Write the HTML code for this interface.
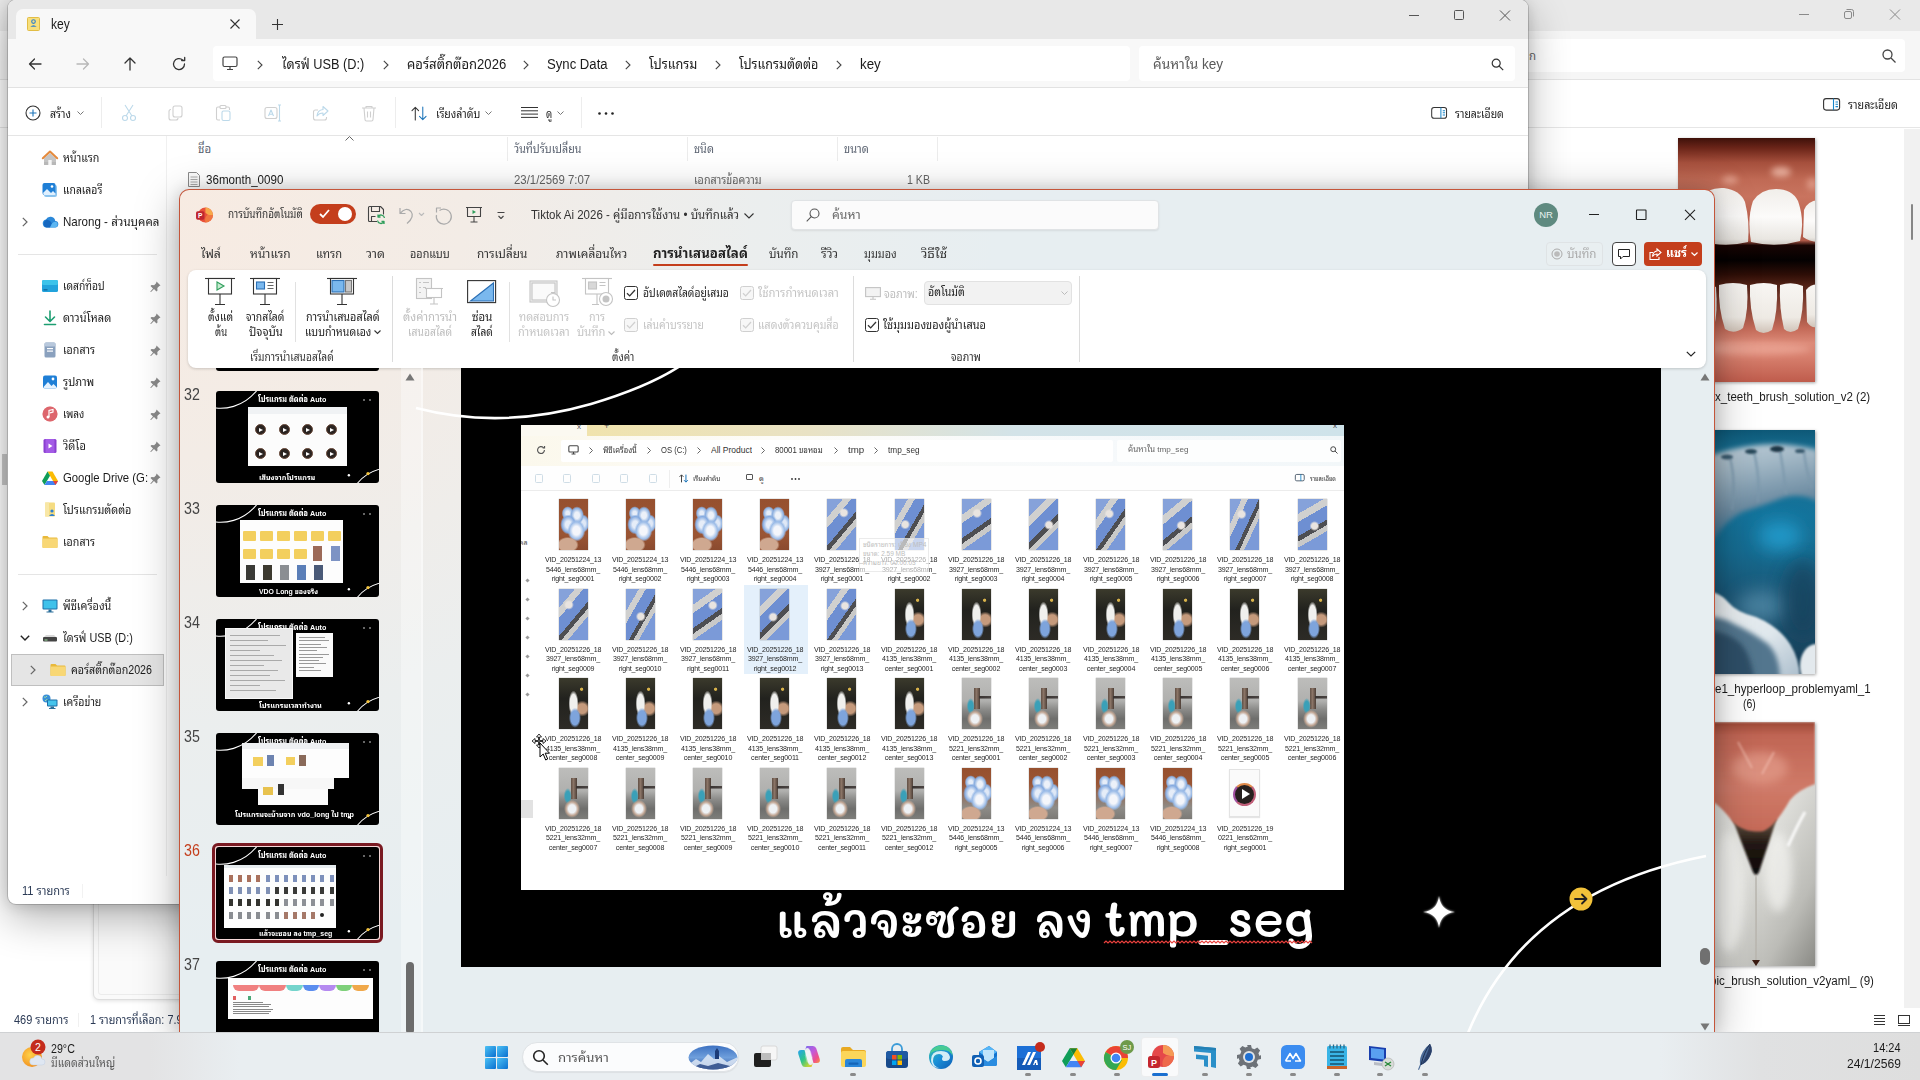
<!DOCTYPE html>
<html lang="th">
<head>
<meta charset="utf-8">
<title>Desktop</title>
<style>
*{box-sizing:border-box;margin:0;padding:0}
html,body{width:1920px;height:1080px;overflow:hidden;background:#fff}
body{position:relative;font-family:"Liberation Sans","Noto Sans Thai Looped","Noto Sans Thai UI","Noto Sans Thai","Loma","Noto Sans CJK SC",sans-serif;font-size:12px;color:#1b1b1b;-webkit-font-smoothing:antialiased}
.abs{position:absolute}
.t{position:absolute;white-space:nowrap;line-height:1}
svg{position:absolute;overflow:visible}
/* background explorer window */
#bg{position:absolute;left:0;top:0;width:1920px;height:1032px;background:#fff}
#bg .title{position:absolute;left:0;top:0;width:1920px;height:31px;background:#e9e9e9}
#bg .nav{position:absolute;left:0;top:31px;width:1920px;height:49px;background:#f6f6f6;border-bottom:1px solid #e3e3e3}
#bg .tool{position:absolute;left:0;top:80px;width:1920px;height:48px;background:#fff;border-bottom:1px solid #e6e6e6}
/* explorer key */
#ex{position:absolute;left:8px;top:0;width:1520px;height:904px;background:#fff;border-radius:8px;box-shadow:0 0 0 1px rgba(0,0,0,.16),0 14px 42px rgba(0,0,0,.30),0 2px 14px rgba(0,0,0,.14);overflow:hidden}
/* ppt */
#pp{position:absolute;left:180px;top:190px;width:1534px;height:842px;border-radius:9px 9px 0 0;background:radial-gradient(ellipse 820px 760px at 0 0,#f7ebe2 0,#f3ece6 35%,rgba(238,238,236,.6) 70%,rgba(231,238,241,0) 100%),#e7eef1;box-shadow:0 0 0 1px #c4553a,0 10px 44px rgba(0,0,0,.34),0 0 16px rgba(0,0,0,.14);overflow:hidden}
/* taskbar */
#tb{position:absolute;left:0;top:1032px;width:1920px;height:48px;background:linear-gradient(90deg,#e3e3e4 0,#e3e3e4 150px,#e9eef1 240px,#e9eef1 1660px,#e0e1e2 1760px,#dedede 100%);border-top:1px solid #cfd1d3}
</style>
</head>
<body>
<div id="bg">
  <div class="title"></div>
  <div class="nav"></div>
  <div class="tool"></div>
  <!-- window buttons -->
  <svg style="left:1780px;top:0" width="140" height="31" viewBox="0 0 140 31" fill="none" stroke="#8a8a8a" stroke-width="1">
    <path d="M19 14.5h10"/>
    <rect x="64.5" y="11.5" width="7" height="7" rx="1.5"/><path d="M66.5 9.500h5a2 2 0 0 1 2 2v5"/>
    <path d="M110 9.500l10 10M120 9.500l-10 10"/>
  </svg>
  <!-- search box -->
  <div class="abs" style="left:1400px;top:39px;width:1505px;height:33px;background:#fff;border-radius:4px;left:400px"></div>
  <span class="t" style="left:1529px;top:51px;font-size:11.500px;color:#666">ก</span>
  <svg style="left:1881px;top:48px" width="16" height="16" viewBox="0 0 16 16" fill="none" stroke="#444" stroke-width="1.3"><circle cx="6.500" cy="6.500" r="4.500"/><path d="M10 10l4.500 4.500"/></svg>
  <!-- details -->
  <svg style="left:1823px;top:98px" width="18" height="14" viewBox="0 0 18 14" fill="none" stroke="#333" stroke-width="1.1"><rect x=".6" y=".6" width="16" height="11.500" rx="2.500"/><path d="M10.500.6v11.500" stroke="#1a86c9"/><path d="M12.500 4h2.500M12.500 6.300h2.500M12.500 8.600h2.500" stroke="#1a86c9"/></svg>
  <span class="t" style="transform:scaleX(0.893);transform-origin:0 0;max-width:57px;overflow-x:clip;left:1848px;top:99px;font-size:12px;color:#222">รายละเอียด</span>
  <!-- scrollbar gutter -->
  <div class="abs" style="left:1904px;top:129px;width:16px;height:879px;background:#f1f1f1"></div>
  <div class="abs" style="left:1911px;top:204px;width:2px;height:36px;background:#868686;border-radius:1px"></div>
  <!-- thumbnails -->
  <svg style="left:1678px;top:138px;box-shadow:1px 1px 3px rgba(0,0,0,.35)" width="137" height="244" viewBox="0 0 137 244">
<defs>
<linearGradient id="g1a" x1="0" y1="0" x2="0" y2="1"><stop offset="0" stop-color="#3e110a"/><stop offset=".04" stop-color="#6a2418"/><stop offset=".1" stop-color="#a54f3c"/><stop offset=".17" stop-color="#c06a55"/><stop offset=".24" stop-color="#c9745f"/><stop offset=".32" stop-color="#bf6652"/><stop offset=".42" stop-color="#b05a48"/><stop offset=".44" stop-color="#180503"/><stop offset=".5" stop-color="#040101"/><stop offset=".56" stop-color="#2e0e07"/><stop offset=".6" stop-color="#4f2014"/><stop offset=".78" stop-color="#c46a58"/><stop offset=".84" stop-color="#dc8a78"/><stop offset=".9" stop-color="#d67e6c"/><stop offset="1" stop-color="#bf5c4c"/></linearGradient>
<linearGradient id="g1t" x1="0" y1="0" x2="0" y2="1"><stop offset="0" stop-color="#f1eeea"/><stop offset=".5" stop-color="#fcfbfa"/><stop offset=".9" stop-color="#e9e6e1"/><stop offset="1" stop-color="#cfcac3"/></linearGradient>
<linearGradient id="g1l" x1="0" y1="0" x2="0" y2="1"><stop offset="0" stop-color="#f8f6f3"/><stop offset=".7" stop-color="#eeeae4"/><stop offset="1" stop-color="#d0c3b8"/></linearGradient>
<filter id="b1" x="-20%" y="-20%" width="140%" height="140%"><feGaussianBlur stdDeviation=".7"/></filter>
<filter id="b1b" x="-100%" y="-100%" width="300%" height="300%"><feGaussianBlur stdDeviation="3"/></filter>
<clipPath id="c1"><rect width="137" height="244"/></clipPath>
</defs>
<g clip-path="url(#c1)">
<rect width="137" height="244" fill="url(#g1a)"/>
<ellipse cx="103" cy="34" rx="10" ry="5" fill="#f4c4b4" opacity=".75" filter="url(#b1b)"/>
<ellipse cx="52" cy="42" rx="8" ry="4" fill="#f0b8a6" opacity=".65" filter="url(#b1b)"/>
<ellipse cx="134" cy="46" rx="5" ry="6" fill="#f0b8a6" opacity=".6" filter="url(#b1b)"/>
<g filter="url(#b1)">
<path d="M73 104Q69 80 75 63Q83 51 98 51Q114 51 120 63Q127 83 122 103Q98 110 73 104Z" fill="url(#g1t)"/>
<path d="M22 103Q16 78 22 60Q30 49 46 50Q62 52 67 64Q72 84 70 104Q46 110 22 103Z" fill="url(#g1t)"/>
<path d="M126 72Q130 62 142 62L142 104Q132 104 125 99Z" fill="url(#g1t)"/>
<path d="M41 147Q55 143 69 147Q71 172 65 190Q56 197 47 191Q40 170 41 147Z" fill="url(#g1l)"/>
<path d="M72 147Q86 143 99 147Q100 174 94 192Q85 198 78 192Q71 170 72 147Z" fill="url(#g1l)"/>
<path d="M102 147Q114 143 125 148Q126 174 120 191Q112 197 106 191Q101 170 102 147Z" fill="url(#g1l)"/>
<path d="M128 152Q134 145 142 147L142 188Q134 192 129 184Z" fill="url(#g1l)"/>
<path d="M20 149Q30 145 38 149Q40 175 36 189Q28 194 22 189Z" fill="url(#g1l)"/>
</g>
<ellipse cx="78" cy="211" rx="55" ry="6" fill="#f2b0a0" opacity=".6" filter="url(#b1b)"/>
</g>
</svg>

  <svg style="left:1678px;top:430px;box-shadow:1px 1px 3px rgba(0,0,0,.35)" width="137" height="244" viewBox="0 0 137 244">
<defs>
<linearGradient id="g2a" x1="0" y1="0" x2="0" y2="1"><stop offset="0" stop-color="#0d5877"/><stop offset=".08" stop-color="#176d90"/><stop offset=".35" stop-color="#14739b"/><stop offset=".5" stop-color="#166b90"/><stop offset=".68" stop-color="#1a5676"/><stop offset=".85" stop-color="#1a4a66"/><stop offset="1" stop-color="#173a52"/></linearGradient>
<linearGradient id="g2r" x1="0" y1="0" x2=".25" y2="1"><stop offset="0" stop-color="#c0cfd9"/><stop offset=".3" stop-color="#a3b8c6"/><stop offset=".7" stop-color="#6d8ca2"/><stop offset="1" stop-color="#2f6f92"/></linearGradient>
<linearGradient id="g2t" x1="0" y1="0" x2="1" y2="1"><stop offset="0" stop-color="#f1f5f7"/><stop offset=".6" stop-color="#dfe7ec"/><stop offset="1" stop-color="#a9bccb"/></linearGradient>
<filter id="b2" x="-30%" y="-30%" width="160%" height="160%"><feGaussianBlur stdDeviation="2.500"/></filter>
<filter id="b2b" x="-100%" y="-100%" width="300%" height="300%"><feGaussianBlur stdDeviation="9"/></filter>
<filter id="b2c" x="-30%" y="-30%" width="160%" height="160%"><feGaussianBlur stdDeviation="1"/></filter>
<clipPath id="c2"><rect width="137" height="244"/></clipPath>
</defs>
<g clip-path="url(#c2)">
<rect width="137" height="244" fill="url(#g2a)"/>
<ellipse cx="102" cy="106" rx="22" ry="14" fill="#25a8dc" opacity=".75" filter="url(#b2b)"/>
<ellipse cx="84" cy="176" rx="26" ry="16" fill="#5a93b0" opacity=".7" filter="url(#b2b)"/>
<ellipse cx="125" cy="170" rx="20" ry="40" fill="#143f5a" opacity=".7" filter="url(#b2b)"/>
<path d="M20 30Q50 18 80 15Q110 12 140 20L140 72Q124 62 104 68Q84 76 64 82Q46 92 36 110L20 112Z" fill="url(#g2r)" filter="url(#b2)"/>
<path d="M52 28q6 22 2 52M76 22q6 24 4 50M102 20q4 22 6 44M126 22q2 18 8 36" stroke="#7c98ac" stroke-width="2.500" fill="none" opacity=".8" filter="url(#b2c)"/>
<ellipse cx="99" cy="19" rx="7" ry="3" fill="#1b3444" filter="url(#b2c)"/>
<ellipse cx="73" cy="21.500" rx="6" ry="2.600" fill="#27465a" filter="url(#b2c)"/>
<ellipse cx="49" cy="27" rx="6" ry="2.600" fill="#3a5a6e" filter="url(#b2c)"/>
<ellipse cx="122" cy="21" rx="5" ry="2" fill="#36566a" filter="url(#b2c)"/>
<path d="M20 160Q40 160 50 172Q58 182 78 187Q100 196 112 214Q122 230 122 250L20 250Z" fill="url(#g2t)" filter="url(#b2c)"/>
<path d="M20 186Q44 186 56 194Q74 202 90 214Q102 226 102 250L20 250Z" fill="#52768e" filter="url(#b2)"/>
<path d="M20 200Q50 200 64 215Q74 228 76 250L20 250Z" fill="#2f5068" filter="url(#b2)"/>
<ellipse cx="138" cy="236" rx="16" ry="22" fill="#e3e9ed" filter="url(#b2c)"/>
</g>
</svg>

  <svg style="left:1678px;top:722px;box-shadow:1px 1px 3px rgba(0,0,0,.35)" width="137" height="244" viewBox="0 0 137 244">
<defs>
<linearGradient id="g3a" x1="0" y1="0" x2="1" y2="1"><stop offset="0" stop-color="#e9e9e5"/><stop offset=".55" stop-color="#e0e0dc"/><stop offset=".82" stop-color="#bcbcb7"/><stop offset="1" stop-color="#8a8a85"/></linearGradient>
<linearGradient id="g3g" x1="0" y1="0" x2="0" y2="1"><stop offset="0" stop-color="#9c4836"/><stop offset=".12" stop-color="#c06554"/><stop offset=".6" stop-color="#cf7a68"/><stop offset="1" stop-color="#c56a58"/></linearGradient>
<linearGradient id="g3d" x1="0" y1="0" x2="0" y2="1"><stop offset="0" stop-color="#6a5848"/><stop offset=".45" stop-color="#241a14"/><stop offset="1" stop-color="#0c0807"/></linearGradient>
<filter id="b3" x="-20%" y="-20%" width="140%" height="140%"><feGaussianBlur stdDeviation="1"/></filter>
<filter id="b3b" x="-100%" y="-100%" width="300%" height="300%"><feGaussianBlur stdDeviation="5"/></filter>
<clipPath id="c3"><rect width="137" height="244"/></clipPath>
</defs>
<g clip-path="url(#c3)">
<rect width="137" height="244" fill="url(#g3a)"/>
<ellipse cx="50" cy="170" rx="16" ry="60" fill="#f6f6f3" opacity=".8" filter="url(#b3b)"/>
<ellipse cx="100" cy="150" rx="14" ry="40" fill="#f4f4f1" opacity=".7" filter="url(#b3b)"/>
<path d="M54 96L99 96L81 150Q78 156 75 150Z" fill="url(#g3d)" filter="url(#b3)"/>
<path d="M78 154Q79 200 78 244" stroke="#b9b6af" stroke-width="3" fill="none" filter="url(#b3)"/>
<path d="M0 0H137V62Q120 68 112 78Q104 92 97 100Q88 110 82 109.500Q72 109.500 67 107.500Q58 104 54 99Q46 88 37 81L0 66Z" fill="url(#g3g)" filter="url(#b3)"/>
<ellipse cx="82" cy="46" rx="28" ry="16" fill="#eaa796" opacity=".55" filter="url(#b3b)"/>
<path d="M60 20l14 26M96 30l-12 22" stroke="#f3c0b2" stroke-width="2" opacity=".6" filter="url(#b3)"/>
<path d="M110 124Q120 102 127 90" stroke="#fff" stroke-width="3" fill="none" opacity=".85" filter="url(#b3)"/>
<path d="M74 238l4 6l4-6z" fill="#3a1a10"/>
</g>
</svg>

  <span class="t" style="transform:scaleX(0.923);transform-origin:0 0;max-width:169px;overflow-x:clip;left:1714.500px;top:391px;font-size:12.500px;color:#1b1b1b">x_teeth_brush_solution_v2 (2)</span>
  <span class="t" style="transform:scaleX(0.926);transform-origin:0 0;max-width:169px;overflow-x:clip;left:1714.500px;top:683px;font-size:12.500px;color:#1b1b1b">e1_hyperloop_problemyaml_1</span>
  <span class="t" style="transform:scaleX(0.840);transform-origin:0 0;max-width:16px;overflow-x:clip;left:1743px;top:698px;font-size:12.500px;color:#1b1b1b">(6)</span>
  <span class="t" style="transform:scaleX(0.929);transform-origin:0 0;max-width:177px;overflow-x:clip;left:1710px;top:975px;font-size:12.500px;color:#1b1b1b">bic_brush_solution_v2yaml_ (9)</span>
  <!-- status bar -->
  <span class="t" style="transform:scaleX(0.915);transform-origin:0 0;max-width:60px;overflow-x:clip;left:14px;top:1014px;font-size:12px;color:#2b3a55">469 รายการ</span>
  <div class="abs" style="left:78px;top:1013px;width:1px;height:14px;background:#f0f0f0"></div>
  <span class="t" style="transform:scaleX(0.901);transform-origin:0 0;max-width:132px;overflow-x:clip;left:90px;top:1014px;font-size:12px;color:#2b3a55">1 รายการที่เลือก: 7.91 MB</span>
  <svg style="left:1873px;top:1013px" width="40" height="14" viewBox="0 0 40 14" fill="none" stroke="#333" stroke-width="1"><path d="M1 2.500h11M1 5.500h11M1 8.500h11M1 11.500h11"/><rect x="25.500" y="2.500" width="11" height="8"/><path d="M25 12.500h12"/></svg>
  <!-- ghost card -->
  <div class="abs" style="left:93px;top:896px;width:95px;height:104px;background:#fafafa;border:1px solid #dedede;border-radius:6px;box-shadow:0 1px 4px rgba(0,0,0,.12)"><div class="abs" style="left:4px;top:4px;right:4px;bottom:4px;border:1px solid #ececec;border-radius:3px"></div></div>
  <!-- left edge bits -->
  <div class="abs" style="left:2px;top:454px;width:5px;height:31px;background:#c9c9c9"></div>
</div>
<div id="ex">
  <!-- title bar -->
  <div class="abs" style="left:0;top:0;width:1520px;height:39px;background:#e8e8e8"></div>
  <div class="abs" style="left:8px;top:9px;width:240px;height:31px;background:#f8f8f8;border-radius:7px 7px 0 0"></div>
  <svg style="left:19px;top:17px" width="13" height="14" viewBox="0 0 13 14"><rect x=".5" y=".5" width="12" height="13" rx="1" fill="#f7df7c" stroke="#e2bd45"/><circle cx="6.500" cy="4.600" r="1.800" fill="none" stroke="#2d7fd0" stroke-width="1.100"/><path d="M3.300 9.800q3.200-3.200 6.400 0z" fill="#2d7fd0"/></svg>
  <span class="t" style="transform:scaleX(0.864);transform-origin:0 0;max-width:23px;overflow-x:clip;left:43px;top:17px;font-size:14px;color:#1b1b1b">key</span>
  <svg style="left:222px;top:19px" width="10" height="10" viewBox="0 0 10 10" stroke="#333" stroke-width="1.100" fill="none"><path d="M.5.5l9 9M9.500.5l-9 9"/></svg>
  <svg style="left:264px;top:19px" width="11" height="11" viewBox="0 0 11 11" stroke="#333" stroke-width="1.100" fill="none"><path d="M5.500 0v11M0 5.500h11"/></svg>
  <svg style="left:1390px;top:0" width="130" height="31" viewBox="0 0 130 31" fill="none" stroke="#555" stroke-width="1">
    <path d="M11 15.500h10"/><rect x="56.500" y="10.500" width="9" height="9" rx="1"/><path d="M102 10.500l10 10M112 10.500l-10 10"/>
  </svg>
  <!-- nav bar -->
  <div class="abs" style="left:0;top:39px;width:1520px;height:49px;background:#f8f8f8;border-bottom:1px solid #e2e2e2"></div>
  <svg style="left:20px;top:56px" width="180" height="16" viewBox="0 0 180 16" fill="none" stroke-width="1.300" stroke-linecap="round" stroke-linejoin="round">
    <path d="M13 8H1.500M6.500 3L1.500 8l5 5" stroke="#333"/>
    <path d="M49 8h11.500M55.500 3l5 5-5 5" stroke="#b8b8b8"/>
    <path d="M102 14V2M97 7l5-5 5 5" stroke="#333"/>
    <path d="M156.500 8a5.500 5.500 0 1 1-1.800-4M156.700 1.500v3h-3" stroke="#333"/>
  </svg>
  <div class="abs" style="left:205px;top:46px;width:917px;height:35px;background:#fff;border-radius:4px"></div>
  <svg style="left:214px;top:56px" width="16" height="15" viewBox="0 0 16 15" fill="none" stroke="#444" stroke-width="1.200"><rect x="1" y="1" width="14" height="9.500" rx="1.500"/><path d="M5 13.500h6M8 10.500v3"/></svg>
  <svg style="left:248.5px;top:60px" width="6" height="10" viewBox="0 0 6 10" fill="none" stroke="#444" stroke-width="1.100"><path d="M.8.800l4.200 4.200-4.200 4.200"/></svg>
  <span class="t" style="transform:scaleX(0.911);transform-origin:0 0;max-width:91px;overflow-x:clip;left:274px;top:57px;font-size:14px;color:#1b1b1b">ไดรฟ์ USB (D:)</span>
  <svg style="left:374.5px;top:60px" width="6" height="10" viewBox="0 0 6 10" fill="none" stroke="#444" stroke-width="1.100"><path d="M.8.800l4.200 4.200-4.200 4.200"/></svg>
  <span class="t" style="transform:scaleX(0.934);transform-origin:0 0;max-width:107px;overflow-x:clip;left:399px;top:57px;font-size:14px;color:#1b1b1b">คอร์สติ๊กต๊อก2026</span>
  <svg style="left:514.5px;top:60px" width="6" height="10" viewBox="0 0 6 10" fill="none" stroke="#444" stroke-width="1.100"><path d="M.8.800l4.200 4.200-4.200 4.200"/></svg>
  <span class="t" style="transform:scaleX(0.938);transform-origin:0 0;max-width:66px;overflow-x:clip;left:539px;top:57px;font-size:14px;color:#1b1b1b">Sync Data</span>
  <svg style="left:617px;top:60px" width="6" height="10" viewBox="0 0 6 10" fill="none" stroke="#444" stroke-width="1.100"><path d="M.8.800l4.200 4.200-4.200 4.200"/></svg>
  <span class="t" style="transform:scaleX(0.906);transform-origin:0 0;max-width:54px;overflow-x:clip;left:641px;top:57px;font-size:14px;color:#1b1b1b">โปรแกรม</span>
  <svg style="left:706.5px;top:60px" width="6" height="10" viewBox="0 0 6 10" fill="none" stroke="#444" stroke-width="1.100"><path d="M.8.800l4.200 4.200-4.200 4.200"/></svg>
  <span class="t" style="transform:scaleX(0.898);transform-origin:0 0;max-width:89px;overflow-x:clip;left:731px;top:57px;font-size:14px;color:#1b1b1b">โปรแกรมตัดต่อ</span>
  <svg style="left:828px;top:60px" width="6" height="10" viewBox="0 0 6 10" fill="none" stroke="#444" stroke-width="1.100"><path d="M.8.800l4.200 4.200-4.200 4.200"/></svg>
  <span class="t" style="transform:scaleX(0.955);transform-origin:0 0;max-width:23px;overflow-x:clip;left:852px;top:57px;font-size:14px;color:#1b1b1b">key</span>
  <div class="abs" style="left:1131px;top:46px;width:376px;height:35px;background:#fff;border-radius:4px"></div>
  <span class="t" style="transform:scaleX(0.972);transform-origin:0 0;max-width:73px;overflow-x:clip;left:1145px;top:57px;font-size:14px;color:#5a5a5a">ค้นหาใน key</span>
  <svg style="left:1483px;top:58px" width="13" height="13" viewBox="0 0 13 13" fill="none" stroke="#333" stroke-width="1.200"><circle cx="5.200" cy="5.200" r="4"/><path d="M8.200 8.200l4 4"/></svg>
  <!-- toolbar -->
  <div class="abs" style="left:0;top:89px;width:1520px;height:47px;background:#fff;border-bottom:1px solid #e5e5e5"></div>
  <svg style="left:17px;top:105px" width="16" height="16" viewBox="0 0 16 16" fill="none" stroke="#333" stroke-width="1.100"><circle cx="8" cy="8" r="7"/><path d="M8 4.500v7M4.500 8h7" stroke="#1a73b8"/></svg>
  <span class="t" style="transform:scaleX(0.875);transform-origin:0 0;max-width:25px;overflow-x:clip;left:42px;top:108px;font-size:12px;color:#1b1b1b">สร้าง</span>
  <svg style="left:69px;top:111px" width="7" height="5" viewBox="0 0 7 5" fill="none" stroke="#777" stroke-width="1"><path d="M.5.5l3 3 3-3"/></svg>
  <div class="abs" style="left:93px;top:97px;width:1px;height:31px;background:#ededed"></div>
  <svg style="left:113px;top:104px" width="260" height="18" viewBox="0 0 260 18" fill="none" stroke="#bcd9ea" stroke-width="1.100" stroke-linejoin="round">
    <path d="M4 1l7 11M12 1L5 12" stroke="#bcd9ea"/><circle cx="4" cy="14" r="2.500"/><circle cx="12" cy="14" r="2.500"/>
    <rect x="52" y="2" width="9" height="11" rx="2" stroke="#cfcfcf"/><path d="M50 5.500a2 2 0 0 0-2 2V14a2 2 0 0 0 2 2h5a2 2 0 0 0 2-2" stroke="#cfcfcf"/>
    <path d="M99 3h-2a1.500 1.500 0 0 0-1.500 1.500v10A1.500 1.500 0 0 0 97 16h2M105 3h2a1.500 1.500 0 0 1 1.500 1.500V6" stroke="#cfcfcf"/><rect x="99" y="1.500" width="6" height="3" rx="1" stroke="#cfcfcf"/><rect x="101" y="7" width="8" height="9.500" rx="1.500" stroke="#bcd9ea"/>
    <rect x="144" y="3.500" width="12" height="11" rx="2" stroke="#cfcfcf"/><path d="M147.500 12l2.500-6 2.500 6M148.300 10.200h3.400" stroke="#bcd9ea"/><path d="M158.500 1v16M157 1h3M157 17h3" stroke="#bcd9ea"/>
    <path d="M197 6h-2.500a2 2 0 0 0-2 2v6a2 2 0 0 0 2 2h9a2 2 0 0 0 2-2v-1" stroke="#cfcfcf"/><path d="M202 2.500l5 4.500-5 4.500V9q-4 0-6 3 .5-6 6-6.500z" stroke="#bcd9ea"/>
    <path d="M241 4h14M245 4V2.500h6V4M243 4l1 11.500a1.500 1.500 0 0 0 1.500 1.500h5a1.500 1.500 0 0 0 1.500-1.500L253 4M246.500 7.500v6M249.500 7.500v6" stroke="#cfcfcf"/>
  </svg>
  <div class="abs" style="left:387px;top:97px;width:1px;height:31px;background:#ededed"></div>
  <svg style="left:403px;top:106px" width="17" height="15" viewBox="0 0 18 16" fill="none" stroke-width="1.100" stroke-linecap="round" stroke-linejoin="round"><path d="M4.500 15V1.500M1 5l3.500-3.500L8 5" stroke="#333"/><path d="M12.500 1v13.500M9 11l3.500 3.500L16 11" stroke="#1a73b8"/></svg>
  <span class="t" style="transform:scaleX(0.880);transform-origin:0 0;max-width:51px;overflow-x:clip;left:427.500px;top:108px;font-size:12px;color:#1b1b1b">เรียงลำดับ</span>
  <svg style="left:477px;top:111px" width="7" height="5" viewBox="0 0 7 5" fill="none" stroke="#777" stroke-width="1"><path d="M.5.5l3 3 3-3"/></svg>
  <svg style="left:513px;top:107px" width="17" height="11" viewBox="0 0 17 11" fill="none" stroke="#333" stroke-width="1"><path d="M0 .5h17M0 3.800h17M0 7.100h17M0 10.400h17"/></svg>
  <span class="t" style="transform:scaleX(0.812);transform-origin:0 0;max-width:9px;overflow-x:clip;left:537.500px;top:108px;font-size:12px;color:#1b1b1b">ดู</span>
  <svg style="left:549px;top:111px" width="7" height="5" viewBox="0 0 7 5" fill="none" stroke="#777" stroke-width="1"><path d="M.5.5l3 3 3-3"/></svg>
  <div class="abs" style="left:573px;top:97px;width:1px;height:31px;background:#ededed"></div>
  <svg style="left:590px;top:112px" width="16" height="3" viewBox="0 0 16 3" fill="#222"><circle cx="1.500" cy="1.500" r="1.300"/><circle cx="8" cy="1.500" r="1.300"/><circle cx="14.500" cy="1.500" r="1.300"/></svg>
  <svg style="left:1423px;top:107px" width="17" height="13" viewBox="0 0 18 14" fill="none" stroke="#333" stroke-width="1.100"><rect x=".6" y=".6" width="16" height="11.500" rx="2.500"/><path d="M10.500.6v11.500" stroke="#1a86c9"/><path d="M12.500 4h2.500M12.500 6.300h2.500M12.500 8.600h2.500" stroke="#1a86c9"/></svg>
  <span class="t" style="transform:scaleX(0.875);transform-origin:0 0;max-width:57px;overflow-x:clip;left:1447px;top:108px;font-size:12px;color:#222">รายละเอียด</span>
  <!-- sidebar -->
  <div class="abs" style="left:158px;top:136px;width:1px;height:740px;background:#f0f0f0"></div>
  <div class="abs" style="left:10px;top:254px;width:139px;height:1px;background:#e5e5e5"></div>
<div class="abs" style="left:10px;top:574px;width:139px;height:1px;background:#e5e5e5"></div>
<div class="abs" style="left:3px;top:654px;width:153px;height:32px;background:#e5e5e5;border:1px solid #bfbfbf"></div>
<svg style="left:34px;top:150px" width="16" height="16" viewBox="0 0 16 16"><path d="M2 8.500v6.500h12V8.500L8 3z" fill="#c4c4c4"/><path d="M2 12v3h12v-3z" fill="#b0b0b0" opacity=".6"/><rect x="6.300" y="10" width="3.400" height="5" fill="#f7f7f7"/><path d="M.8 8.300L8 1.600l7.200 6.700" fill="none" stroke="#e58a3c" stroke-width="2" stroke-linejoin="round" stroke-linecap="round"/></svg>
<span class="t" style="transform:scaleX(0.890);transform-origin:0 0;max-width:42px;overflow-x:clip;left:55px;top:152px;font-size:12px;color:#1b1b1b">หน้าแรก</span>
<svg style="left:34px;top:182px" width="16" height="16" viewBox="0 0 16 16"><rect x="2" y="3" width="13" height="12" rx="2" fill="#8cc4ee"/><rect x="0.500" y="1" width="13" height="12" rx="2" fill="#1f7fd6"/><path d="M1 11l4-4 4 4 2-2 2.500 2.500v.5a1 1 0 0 1-1 1h-10.500z" fill="#dff0ff"/><circle cx="10" cy="4.500" r="1.300" fill="#fff"/></svg>
<span class="t" style="transform:scaleX(0.867);transform-origin:0 0;max-width:46px;overflow-x:clip;left:55px;top:184px;font-size:12px;color:#1b1b1b">แกลเลอรี</span>
<svg style="left:34px;top:214px" width="16" height="16" viewBox="0 0 16 16"><path d="M4.500 13.500a4 4 0 0 1-.6-7.900 5 5 0 0 1 9.400 1.300 3.300 3.300 0 0 1-.6 6.600z" fill="#2b88d8"/><path d="M4.500 13.500a4 4 0 0 1 1-7.800q3 .5 4.500 3.800l-2 4z" fill="#1668c0"/><path d="M8 13.500l2-4q2-2.500 4.800-1.300a3.300 3.300 0 0 1-1.500 5.300z" fill="#5cb6f2"/></svg>
<span class="t" style="transform:scaleX(0.889);transform-origin:0 0;max-width:109px;overflow-x:clip;left:55px;top:215px;font-size:13px;color:#1b1b1b">Narong - ส่วนบุคคล</span>
<svg style="left:14px;top:217px" width="6" height="10" viewBox="0 0 6 10" fill="none" stroke="#666" stroke-width="1.200"><path d="M.8.800l4.200 4.200-4.200 4.200"/></svg>
<svg style="left:34px;top:278px" width="16" height="16" viewBox="0 0 16 16"><rect x="0" y="2" width="16" height="12" rx="1.500" fill="#22a3dc"/><rect x="0" y="2" width="16" height="5" rx="1.500" fill="#3cc3ea"/><rect x="1.500" y="11" width="4" height="1.500" fill="#0f6fa6"/></svg>
<span class="t" style="transform:scaleX(0.857);transform-origin:0 0;max-width:50px;overflow-x:clip;left:55px;top:280px;font-size:12px;color:#1b1b1b">เดสก์ท็อป</span>
<svg style="left:142px;top:281px" width="11" height="11" viewBox="0 0 11 11"><path d="M6.500.5l4 4-1.200.4-2 2 .2 2.600-1 1-2.500-2.500L1 11l-.8-.2L3 7.500.5 5l1-1 2.600.2 2-2z" fill="#8a8a8a"/></svg>
<svg style="left:34px;top:310px" width="16" height="16" viewBox="0 0 16 16"><path d="M8 1v10M3.500 7L8 11.500 12.500 7" fill="none" stroke="#1e9e72" stroke-width="1.600" stroke-linecap="round" stroke-linejoin="round"/><path d="M2.500 14.500h11" stroke="#1e9e72" stroke-width="1.600" stroke-linecap="round"/></svg>
<span class="t" style="transform:scaleX(0.923);transform-origin:0 0;max-width:53px;overflow-x:clip;left:55px;top:312px;font-size:12px;color:#1b1b1b">ดาวน์โหลด</span>
<svg style="left:142px;top:313px" width="11" height="11" viewBox="0 0 11 11"><path d="M6.500.5l4 4-1.200.4-2 2 .2 2.600-1 1-2.500-2.500L1 11l-.8-.2L3 7.500.5 5l1-1 2.600.2 2-2z" fill="#8a8a8a"/></svg>
<svg style="left:34px;top:342px" width="16" height="16" viewBox="0 0 16 16"><rect x="2.500" y="0.500" width="11" height="15" rx="1.500" fill="#8aa1be"/><rect x="2.500" y="0.500" width="11" height="4" rx="1.500" fill="#b8c8dc"/><rect x="5" y="6" width="6" height="1.200" fill="#fff"/><rect x="5" y="8.500" width="6" height="1.200" fill="#fff"/></svg>
<span class="t" style="transform:scaleX(0.889);transform-origin:0 0;max-width:37px;overflow-x:clip;left:55px;top:344px;font-size:12px;color:#1b1b1b">เอกสาร</span>
<svg style="left:142px;top:345px" width="11" height="11" viewBox="0 0 11 11"><path d="M6.500.5l4 4-1.200.4-2 2 .2 2.600-1 1-2.500-2.500L1 11l-.8-.2L3 7.500.5 5l1-1 2.600.2 2-2z" fill="#8a8a8a"/></svg>
<svg style="left:34px;top:374px" width="16" height="16" viewBox="0 0 16 16"><rect x="1" y="1.500" width="14" height="13" rx="2" fill="#1f7fd6"/><path d="M1.500 13l4.500-5 3.500 4 2-2 3 3v.5a1 1 0 0 1-1 1h-11z" fill="#e4f2ff"/><circle cx="11" cy="5" r="1.400" fill="#fff"/></svg>
<span class="t" style="transform:scaleX(0.912);transform-origin:0 0;max-width:35px;overflow-x:clip;left:55px;top:376px;font-size:12px;color:#1b1b1b">รูปภาพ</span>
<svg style="left:142px;top:377px" width="11" height="11" viewBox="0 0 11 11"><path d="M6.500.5l4 4-1.200.4-2 2 .2 2.600-1 1-2.500-2.500L1 11l-.8-.2L3 7.500.5 5l1-1 2.600.2 2-2z" fill="#8a8a8a"/></svg>
<svg style="left:34px;top:406px" width="16" height="16" viewBox="0 0 16 16"><circle cx="8" cy="8" r="7.500" fill="#e0655a"/><circle cx="8" cy="8" r="7.500" fill="#d96a8a" opacity=".4"/><path d="M7 11V4.500l4-1V6l-3 .8" fill="none" stroke="#fff" stroke-width="1.200"/><circle cx="6" cy="11" r="1.500" fill="#fff"/></svg>
<span class="t" style="transform:scaleX(0.840);transform-origin:0 0;max-width:26px;overflow-x:clip;left:55px;top:408px;font-size:12px;color:#1b1b1b">เพลง</span>
<svg style="left:142px;top:409px" width="11" height="11" viewBox="0 0 11 11"><path d="M6.500.5l4 4-1.200.4-2 2 .2 2.600-1 1-2.500-2.500L1 11l-.8-.2L3 7.500.5 5l1-1 2.600.2 2-2z" fill="#8a8a8a"/></svg>
<svg style="left:34px;top:438px" width="16" height="16" viewBox="0 0 16 16"><rect x="1.500" y="1" width="13" height="14" rx="1.500" fill="#8a3fd0"/><rect x="3.500" y="1" width="9" height="14" fill="#a35be6"/><path d="M6.500 5.500v5l4-2.500z" fill="#fff"/></svg>
<span class="t" style="transform:scaleX(0.920);transform-origin:0 0;max-width:26px;overflow-x:clip;left:55px;top:440px;font-size:12px;color:#1b1b1b">วิดีโอ</span>
<svg style="left:142px;top:441px" width="11" height="11" viewBox="0 0 11 11"><path d="M6.500.5l4 4-1.200.4-2 2 .2 2.600-1 1-2.500-2.500L1 11l-.8-.2L3 7.500.5 5l1-1 2.600.2 2-2z" fill="#8a8a8a"/></svg>
<svg style="left:34px;top:470px" width="16" height="16" viewBox="0 0 16 16"><path d="M5.500 1.500h5L16 11h-5z" fill="#fbbc04"/><path d="M5.500 1.500L0 11l2.500 4L8 5.800z" fill="#0f9d58"/><path d="M2.500 15h11L16 11H5z" fill="#4285f4"/><path d="M11 11h5l-2.500 4z" fill="#ea4335"/></svg>
<span class="t" style="transform:scaleX(0.872);transform-origin:0 0;max-width:99px;overflow-x:clip;left:55px;top:471px;font-size:13px;color:#1b1b1b">Google Drive (G:</span>
<svg style="left:142px;top:473px" width="11" height="11" viewBox="0 0 11 11"><path d="M6.500.5l4 4-1.200.4-2 2 .2 2.600-1 1-2.500-2.500L1 11l-.8-.2L3 7.500.5 5l1-1 2.600.2 2-2z" fill="#8a8a8a"/></svg>
<svg style="left:34px;top:502px" width="16" height="16" viewBox="0 0 16 16"><rect x="3" y="0.500" width="10" height="14" rx="1" fill="#f5dc82"/><rect x="3" y="0.500" width="4" height="14" fill="#f8e7a6"/><circle cx="10" cy="9" r="1.600" fill="#2d7fd0"/><path d="M7 14q3-4 6 0z" fill="#2d7fd0"/></svg>
<span class="t" style="transform:scaleX(0.903);transform-origin:0 0;max-width:77px;overflow-x:clip;left:55px;top:504px;font-size:12px;color:#1b1b1b">โปรแกรมตัดต่อ</span>
<svg style="left:34px;top:534px" width="16" height="16" viewBox="0 0 16 16"><path d="M0.500 3a1 1 0 0 1 1-1h4l1.500 1.500h7.500a1 1 0 0 1 1 1V13a1 1 0 0 1-1 1h-13a1 1 0 0 1-1-1z" fill="#e9b93a"/><rect x="0.500" y="4.500" width="15" height="9.500" rx="1" fill="#f8d775"/></svg>
<span class="t" style="transform:scaleX(0.889);transform-origin:0 0;max-width:37px;overflow-x:clip;left:55px;top:536px;font-size:12px;color:#1b1b1b">เอกสาร</span>
<svg style="left:34px;top:598px" width="16" height="16" viewBox="0 0 16 16"><rect x="0.500" y="1.500" width="15" height="10" rx="1" fill="#1c6ea8"/><rect x="1.500" y="2.500" width="13" height="8" fill="#3ec1ea"/><path d="M6.500 11.500h3v2h2v1h-7v-1h2z" fill="#2a6e9a"/></svg>
<span class="t" style="transform:scaleX(0.906);transform-origin:0 0;max-width:54px;overflow-x:clip;left:55px;top:600px;font-size:12px;color:#1b1b1b">พีซีเครื่องนี้</span>
<svg style="left:14px;top:601px" width="6" height="10" viewBox="0 0 6 10" fill="none" stroke="#666" stroke-width="1.200"><path d="M.8.800l4.200 4.200-4.200 4.200"/></svg>
<svg style="left:34px;top:630px" width="16" height="16" viewBox="0 0 16 16"><path d="M2 7l2-2h8l2 2z" fill="#d8d8d8"/><rect x="1" y="7" width="14" height="4.500" rx="1" fill="#444"/><rect x="2.500" y="9.500" width="3" height="1" fill="#9d9"/></svg>
<span class="t" style="transform:scaleX(0.833);transform-origin:0 0;max-width:85px;overflow-x:clip;left:55px;top:631px;font-size:13px;color:#1b1b1b">ไดรฟ์ USB (D:)</span>
<svg style="left:12px;top:635px" width="10" height="6" viewBox="0 0 10 6" fill="none" stroke="#222" stroke-width="1.400"><path d="M.8.800l4.200 4.200 4.200-4.200"/></svg>
<svg style="left:34px;top:694px" width="16" height="16" viewBox="0 0 16 16"><circle cx="4.500" cy="4.500" r="4" fill="#3a8fd8"/><path d="M2 3q2 1 3-1M3 7q1-2 3-1" stroke="#9fe0a0" fill="none"/><rect x="5" y="5.500" width="10.500" height="7" rx="1" fill="#1c6ea8"/><rect x="6" y="6.500" width="8.500" height="5" fill="#45c4ec"/><path d="M8.500 12.500h3.500v1.500h1.500v1h-6.500v-1h1.500z" fill="#2a6e9a"/></svg>
<span class="t" style="transform:scaleX(0.884);transform-origin:0 0;max-width:44px;overflow-x:clip;left:55px;top:696px;font-size:12px;color:#1b1b1b">เครือข่าย</span>
<svg style="left:14px;top:697px" width="6" height="10" viewBox="0 0 6 10" fill="none" stroke="#666" stroke-width="1.200"><path d="M.8.800l4.200 4.200-4.200 4.200"/></svg>
<svg style="left:22px;top:665px" width="6" height="10" viewBox="0 0 6 10" fill="none" stroke="#666" stroke-width="1.200"><path d="M.8.800l4.200 4.200-4.200 4.200"/></svg>
<svg style="left:42px;top:662px" width="16" height="16" viewBox="0 0 16 16"><path d="M0.500 3a1 1 0 0 1 1-1h4l1.500 1.500h7.500a1 1 0 0 1 1 1V13a1 1 0 0 1-1 1h-13a1 1 0 0 1-1-1z" fill="#e9b93a"/><rect x="0.500" y="4.500" width="15" height="9.500" rx="1" fill="#f8d775"/></svg>
<span class="t" style="transform:scaleX(0.890);transform-origin:0 0;max-width:92px;overflow-x:clip;left:63px;top:664px;font-size:12px;color:#1b1b1b">คอร์สติ๊กต๊อก2026</span>
  <!-- columns -->
  <svg style="left:337px;top:136px" width="9" height="5" viewBox="0 0 9 5" fill="none" stroke="#666" stroke-width="1"><path d="M.5 4.500l4-4 4 4"/></svg>
  <span class="t" style="transform:scaleX(1.000);transform-origin:0 0;max-width:14px;overflow-x:clip;left:190px;top:144px;font-size:11.500px;color:#5a6270">ชื่อ</span>
  <span class="t" style="transform:scaleX(0.931);transform-origin:0 0;max-width:73px;overflow-x:clip;left:506px;top:144px;font-size:11.500px;color:#5a6270">วันที่ปรับเปลี่ยน</span>
  <span class="t" style="transform:scaleX(0.952);transform-origin:0 0;max-width:22px;overflow-x:clip;left:686px;top:144px;font-size:11.500px;color:#5a6270">ชนิด</span>
  <span class="t" style="transform:scaleX(0.962);transform-origin:0 0;max-width:27px;overflow-x:clip;left:836px;top:144px;font-size:11.500px;color:#5a6270">ขนาด</span>
  <div class="abs" style="left:499px;top:137px;width:1px;height:24px;background:#ececec"></div>
  <div class="abs" style="left:679px;top:137px;width:1px;height:24px;background:#ececec"></div>
  <div class="abs" style="left:829px;top:137px;width:1px;height:24px;background:#ececec"></div>
  <div class="abs" style="left:929px;top:137px;width:1px;height:24px;background:#ececec"></div>
  <svg style="left:180px;top:172px" width="12" height="15" viewBox="0 0 12 15" fill="#fafafa" stroke="#8a8a8a" stroke-width="1"><path d="M.5.5h8l3 3v11H.5z"/><path d="M2.500 5h7M2.500 7.500h7M2.500 10h7M2.500 12.500h7" stroke="#aaa"/></svg>
  <span class="t" style="transform:scaleX(0.928);transform-origin:0 0;max-width:84px;overflow-x:clip;left:198px;top:174px;font-size:12.500px;color:#1b1b1b">36month_0090</span>
  <span class="t" style="transform:scaleX(0.950);transform-origin:0 0;max-width:81px;overflow-x:clip;left:506px;top:174px;font-size:12px;color:#666">23/1/2569 7:07</span>
  <span class="t" style="transform:scaleX(0.895);transform-origin:0 0;max-width:77px;overflow-x:clip;left:686px;top:174px;font-size:12px;color:#666">เอกสารข้อความ</span>
  <span class="t" style="transform:scaleX(0.885);transform-origin:0 0;max-width:27px;overflow-x:clip;left:899px;top:174px;font-size:12px;color:#666">1 KB</span>
  <span class="t" style="transform:scaleX(0.923);transform-origin:0 0;max-width:53px;overflow-x:clip;left:14px;top:885px;font-size:12px;color:#2b3a55">11 รายการ</span>
  <div class="abs" style="left:74px;top:884px;width:1px;height:14px;background:#f2f2f2"></div>
</div>
<div id="pp">
  <!-- title bar -->
  <svg style="left:15.500px;top:16.500px" width="17" height="16" viewBox="0 0 18 17"><circle cx="10" cy="8.500" r="8" fill="#e8503a"/><path d="M10 .5a8 8 0 0 1 8 8q-5 1-8-2.500z" fill="#f7a94a"/><path d="M18 8.500a8 8 0 0 1-8 8q-1.500-5 2-8z" fill="#f0763f"/><rect x="0" y="4.500" width="9" height="9" rx="1.800" fill="#c0262e"/><text x="4.500" y="11.600" font-size="7" font-weight="bold" fill="#fff" text-anchor="middle" font-family="Liberation Sans,sans-serif">P</text></svg>
  <span class="t" style="transform:scaleX(0.866);transform-origin:0 0;max-width:87px;overflow-x:clip;left:48px;top:19px;font-size:11.500px;color:#333">การบันทึกอัตโนมัติ</span>
  <div class="abs" style="left:130px;top:14px;width:46px;height:20px;border-radius:10px;background:#c43e1c"></div>
  <div class="abs" style="left:158px;top:17px;width:14px;height:14px;border-radius:7px;background:#fff"></div>
  <svg style="left:139px;top:19px" width="11" height="10" viewBox="0 0 11 10" fill="none" stroke="#fff" stroke-width="1.800"><path d="M1 5l3 3 6-7"/></svg>
  <svg style="left:187px;top:15px" width="135" height="20" viewBox="0 0 135 20" fill="none" stroke-width="1.100" stroke-linejoin="round">
    <path d="M10 16.500H2.500a1 1 0 0 1-1-1v-13a1 1 0 0 1 1-1h11l3 3v5" stroke="#444"/><path d="M4.500 1.500v5h8v-5M4.500 16.500v-5h4" stroke="#444"/><path d="M17.500 13a3.500 3.500 0 0 0-6.500-1.200M10.500 15.500a3.500 3.500 0 0 0 6.500 1.200M11 9.500v2.500h2.500M17 19v-2.500h-2.500" stroke="#2e9e5b" stroke-width="1.300"/>
    <path d="M33 3v5.500h5.500M33 8.500q6-7 11-2 4 5-4 12" stroke="#aaa" stroke-width="1.200"/><path d="M52 8l2.500 2.500 2.500-2.500" stroke="#bbb"/>
    <path d="M84 4.500v5h-5M84 9.500a7 7 0 1 0-1 6.500" stroke="#aaa" stroke-width="1.200" transform="translate(160,0) scale(-1,1) translate(-8,0)" opacity="0"/>
    <path d="M72.500 5.500a7.500 7.500 0 1 1-3 4.500" stroke="#aaa" stroke-width="1.200"/><path d="M69.500 7.500v-4.500h4.500" stroke="#aaa" stroke-width="1.200"/>
    <rect x="100.500" y="2.500" width="13" height="9" stroke="#444"/><path d="M99 2.500h16M107 11.500v5M103.500 17h7" stroke="#444"/><path d="M105.500 5v4l3.500-2z" fill="#2e9e5b" stroke="none"/>
    <path d="M131 7.500h7M132 11l2.500 2.500 2.500-2.500" stroke="#444" transform="translate(-.5,0)"/>
  </svg>
  <span class="t" style="transform:scaleX(0.920);transform-origin:0 0;max-width:227px;overflow-x:clip;left:351px;top:19px;font-size:12.500px;color:#333">Tiktok Ai 2026 - คู่มือการใช้งาน • บันทึกแล้ว</span>
  <svg style="left:564px;top:23px" width="10" height="6" viewBox="0 0 10 6" fill="none" stroke="#333" stroke-width="1.100"><path d="M.5.5l4.500 4.500 4.500-4.500"/></svg>
  <div class="abs" style="left:611px;top:10px;width:368px;height:30px;background:#fbfbfb;border:1px solid #e0e3e5;border-radius:4px;box-shadow:0 1px 2px rgba(0,0,0,.08)"></div>
  <svg style="left:626px;top:18px" width="14" height="14" viewBox="0 0 14 14" fill="none" stroke="#555" stroke-width="1.100"><circle cx="8.500" cy="5.500" r="4.500"/><path d="M5.300 8.700L.7 13.300"/></svg>
  <span class="t" style="transform:scaleX(0.983);transform-origin:0 0;max-width:30px;overflow-x:clip;left:652px;top:19px;font-size:12.500px;color:#666">ค้นหา</span>
  <div class="abs" style="left:1354px;top:13px;width:24px;height:24px;border-radius:12px;background:#5f8a80;color:#e8f2ef;font-size:9.500px;text-align:center;line-height:24px">NR</div>
  <svg style="left:1408px;top:19px" width="110" height="12" viewBox="0 0 110 12" fill="none" stroke="#222" stroke-width="1.100"><path d="M1 5.500h10"/><rect x="48.500" y="1" width="9.500" height="9.500" rx=".5"/><path d="M97 .8l10 10M107 .8l-10 10"/></svg>
  <!-- tabs -->
  <span class="t" style="transform:scaleX(0.952);transform-origin:0 0;max-width:22px;overflow-x:clip;left:21px;top:57px;font-size:13px;color:#333">ไฟล์</span>
  <span class="t" style="transform:scaleX(0.920);transform-origin:0 0;max-width:45px;overflow-x:clip;left:70px;top:57px;font-size:13px;color:#333">หน้าแรก</span>
  <span class="t" style="transform:scaleX(0.855);transform-origin:0 0;max-width:32px;overflow-x:clip;left:136px;top:57px;font-size:13px;color:#333">แทรก</span>
  <span class="t" style="transform:scaleX(0.950);transform-origin:0 0;max-width:21px;overflow-x:clip;left:185.5px;top:57px;font-size:13px;color:#333">วาด</span>
  <span class="t" style="transform:scaleX(0.833);transform-origin:0 0;max-width:49px;overflow-x:clip;left:229.5px;top:57px;font-size:13px;color:#333">ออกแบบ</span>
  <span class="t" style="transform:scaleX(0.906);transform-origin:0 0;max-width:57px;overflow-x:clip;left:296.75px;top:57px;font-size:13px;color:#333">การเปลี่ยน</span>
  <span class="t" style="transform:scaleX(0.920);transform-origin:0 0;max-width:79px;overflow-x:clip;left:375.75px;top:57px;font-size:13px;color:#333">ภาพเคลื่อนไหว</span>
  <span class="t" style="transform:scaleX(1.019);transform-origin:0 0;max-width:94px;overflow-x:clip;left:473.25px;top:57px;font-size:13px;color:#333;font-weight:bold;color:#222">การนำเสนอสไลด์</span>
  <span class="t" style="transform:scaleX(0.894);transform-origin:0 0;max-width:34px;overflow-x:clip;left:588.75px;top:57px;font-size:13px;color:#333">บันทึก</span>
  <span class="t" style="transform:scaleX(0.921);transform-origin:0 0;max-width:20px;overflow-x:clip;left:640.75px;top:57px;font-size:13px;color:#333">รีวิว</span>
  <span class="t" style="transform:scaleX(0.833);transform-origin:0 0;max-width:40px;overflow-x:clip;left:683.75px;top:57px;font-size:13px;color:#333">มุมมอง</span>
  <span class="t" style="transform:scaleX(1.019);transform-origin:0 0;max-width:27px;overflow-x:clip;left:741px;top:57px;font-size:13px;color:#333">วิธีใช้</span>
  <div class="abs" style="left:473px;top:74px;width:95px;height:2px;background:#c43e1c;border-radius:1px"></div>
  <div class="abs" style="left:1366px;top:52px;width:57px;height:24px;border:1px solid #dfe3e5;border-radius:4px;background:#e9eff1"></div>
  <svg style="left:1371px;top:58px" width="12" height="12" viewBox="0 0 12 12" fill="none" stroke="#aaa"><circle cx="6" cy="6" r="5"/><circle cx="6" cy="6" r="2.800" fill="#bbb" stroke="none"/></svg>
  <span class="t" style="transform:scaleX(0.967);transform-origin:0 0;max-width:31px;overflow-x:clip;left:1387px;top:58px;font-size:12px;color:#aaa">บันทึก</span>
  <div class="abs" style="left:1432px;top:52px;width:24px;height:24px;border:1px solid #444;border-radius:4px;background:#fff"></div>
  <svg style="left:1438px;top:59px" width="12" height="11" viewBox="0 0 12 11" fill="none" stroke="#222" stroke-width="1"><path d="M.5.5h11v7H5l-2.500 2.500V7.500h-2z"/></svg>
  <div class="abs" style="left:1464px;top:52px;width:58px;height:24px;border-radius:4px;background:#c43e1c"></div>
  <svg style="left:1469px;top:58px" width="13" height="12" viewBox="0 0 13 12" fill="none" stroke="#fff" stroke-width="1.100"><path d="M4 4.500H1v7h9V9"/><path d="M8 1l4 3.500-4 3.500V6q-3 0-4.500 2.500Q4 3.500 8 3z"/></svg>
  <span class="t" style="transform:scaleX(0.955);transform-origin:0 0;max-width:23px;overflow-x:clip;left:1486px;top:57px;font-size:12.500px;color:#fff;font-weight:bold">แชร์</span>
  <svg style="left:1511px;top:62px" width="7" height="5" viewBox="0 0 7 5" fill="none" stroke="#fff" stroke-width="1.200"><path d="M.5.5l3 3 3-3"/></svg>
  <!-- ribbon -->
  <div class="abs" style="left:8px;top:80px;width:1518px;height:98px;background:#fff;border-radius:8px;box-shadow:0 1px 3px rgba(0,0,0,.18)"></div>
  <!-- ribbon content; coords relative to #pp (180,190) -->
<svg style="left:24px;top:86px" width="32" height="32" viewBox="0 0 32 32" fill="none" stroke="#333" stroke-width="1.100"><path d="M1 2.500h30"/><rect x="4.500" y="2.500" width="23" height="15.500" fill="#fff"/><path d="M16 18v10.500M11 28.500h10"/><path d="M13 6v8l7-4z" fill="#c9ecd2" stroke="#2e9e5b"/></svg>
<span class="t" style="transform:scaleX(0.862);transform-origin:0 0;max-width:30px;overflow-x:clip;left:28px;top:121px;font-size:12px;color:#222">ตั้งแต่</span>
<span class="t" style="transform:scaleX(0.800);transform-origin:0 0;max-width:16px;overflow-x:clip;left:35px;top:136px;font-size:12px;color:#222">ต้น</span>
<svg style="left:69px;top:86px" width="32" height="32" viewBox="0 0 32 32" fill="none" stroke="#333" stroke-width="1.100"><path d="M1 2.500h30"/><rect x="4.500" y="2.500" width="23" height="15.500" fill="#fff"/><path d="M16 18v10.500M11 28.500h10"/><rect x="7.500" y="6" width="8" height="7" fill="#7ab8ee" stroke="#2b6fb5"/><path d="M18.500 6.500h6M18.500 9.500h6M18.500 12.500h6" stroke="#666"/></svg>
<span class="t" style="transform:scaleX(0.864);transform-origin:0 0;max-width:45px;overflow-x:clip;left:66px;top:121px;font-size:12px;color:#222">จากสไลด์</span>
<span class="t" style="transform:scaleX(0.944);transform-origin:0 0;max-width:37px;overflow-x:clip;left:69px;top:136px;font-size:12px;color:#222">ปัจจุบัน</span>
<div class="abs" style="left:115px;top:92px;width:1px;height:60px;background:#e1e1e1"></div>
<svg style="left:146px;top:86px" width="32" height="32" viewBox="0 0 32 32" fill="none" stroke="#333" stroke-width="1.100"><path d="M1 2.500h30"/><rect x="4.500" y="2.500" width="23" height="15.500" fill="#fff"/><path d="M16 18v10.500M11 28.500h10"/><rect x="6" y="4.500" width="12" height="11.500" fill="#7ab8ee" stroke="#2b6fb5"/><rect x="19.500" y="4.500" width="6" height="11.500" fill="#c8c8c8" stroke="#777"/></svg>
<span class="t" style="transform:scaleX(0.902);transform-origin:0 0;max-width:83px;overflow-x:clip;left:126px;top:121px;font-size:12px;color:#222">การนำเสนอสไลด์</span>
<span class="t" style="transform:scaleX(0.880);transform-origin:0 0;max-width:76px;overflow-x:clip;left:125px;top:136px;font-size:12px;color:#222">แบบกำหนดเอง</span>
<svg style="left:194px;top:140px" width="7" height="5" viewBox="0 0 7 5" fill="none" stroke="#333" stroke-width="1.100"><path d="M.5.5l3 3 3-3"/></svg>
<span class="t" style="transform:scaleX(0.884);transform-origin:0 0;max-width:96px;overflow-x:clip;left:70px;top:162px;font-size:11.500px;color:#333">เริ่มการนำเสนอสไลด์</span>
<div class="abs" style="left:212px;top:86px;width:1px;height:86px;background:#dcdcdc"></div>
<svg style="left:234px;top:86px" width="32" height="32" viewBox="0 0 32 32" fill="none" stroke="#c4c4c4" stroke-width="1.100"><rect x="2.500" y="2.500" width="15" height="20" fill="#f3f3f3"/><path d="M5 6.500h2M5 11.500h2M5 16.500h2M9 6.500h6M9 11.500h3" /><rect x="12.500" y="12.500" width="15" height="9" fill="#fff"/><path d="M11 12.500h18M20 21.500v6M16 28h8"/></svg>
<span class="t" style="transform:scaleX(0.947);transform-origin:0 0;max-width:58px;overflow-x:clip;left:223px;top:121px;font-size:12px;color:#bdbdbd">ตั้งค่าการนำ</span>
<span class="t" style="transform:scaleX(0.863);transform-origin:0 0;max-width:52px;overflow-x:clip;left:228px;top:136px;font-size:12px;color:#bdbdbd">เสนอสไลด์</span>
<svg style="left:287px;top:90px" width="30" height="24" viewBox="0 0 30 24" fill="none" stroke="#333" stroke-width="1.100"><rect x=".6" y=".6" width="28" height="22" fill="#fff"/><path d="M3.500 21L26.500 3v18z" fill="#7ab8ee" stroke="#2b6fb5"/></svg>
<span class="t" style="transform:scaleX(0.952);transform-origin:0 0;max-width:22px;overflow-x:clip;left:292px;top:121px;font-size:12px;color:#222">ซ่อน</span>
<span class="t" style="transform:scaleX(0.846);transform-origin:0 0;max-width:27px;overflow-x:clip;left:291px;top:136px;font-size:12px;color:#222">สไลด์</span>
<div class="abs" style="left:329px;top:92px;width:1px;height:60px;background:#e1e1e1"></div>
<svg style="left:349px;top:88px" width="34" height="32" viewBox="0 0 34 32" fill="none" stroke="#c4c4c4" stroke-width="1.100"><rect x="1" y="3" width="27" height="21" fill="#f3f3f3"/><rect x="3" y="5" width="23" height="17" fill="#fafafa"/><circle cx="24" cy="22" r="6.500" fill="#fff"/><path d="M24 18.500v3.500h3M22 14.500h4"/></svg>
<span class="t" style="transform:scaleX(0.909);transform-origin:0 0;max-width:56px;overflow-x:clip;left:339px;top:121px;font-size:12px;color:#c4c4c4">ทดสอบการ</span>
<span class="t" style="transform:scaleX(0.912);transform-origin:0 0;max-width:58px;overflow-x:clip;left:338px;top:136px;font-size:12px;color:#c4c4c4">กำหนดเวลา</span>
<svg style="left:401px;top:86px" width="34" height="32" viewBox="0 0 34 32" fill="none" stroke="#c4c4c4" stroke-width="1.100"><path d="M1 2.500h30"/><rect x="4.500" y="2.500" width="23" height="15.500" fill="#fff"/><rect x="7.500" y="6" width="8" height="7" fill="#d8d8d8"/><path d="M18.500 6.500h6M18.500 9.500h6M16 18v10M11 28.500h7"/><circle cx="25" cy="23" r="6.500" fill="#fff"/><circle cx="25" cy="23" r="3.500" fill="#c4c4c4" stroke="none"/></svg>
<span class="t" style="transform:scaleX(0.889);transform-origin:0 0;max-width:19px;overflow-x:clip;left:409px;top:121px;font-size:12px;color:#c4c4c4">การ</span>
<span class="t" style="transform:scaleX(0.933);transform-origin:0 0;max-width:31px;overflow-x:clip;left:397px;top:136px;font-size:12px;color:#c4c4c4">บันทึก</span>
<svg style="left:428px;top:141px" width="7" height="5" viewBox="0 0 7 5" fill="none" stroke="#bbb" stroke-width="1.100"><path d="M.5.5l3 3 3-3"/></svg>
<!-- checkboxes -->
<svg style="left:444px;top:96px" width="14" height="14" viewBox="0 0 14 14" fill="none" stroke="#333" stroke-width="1"><rect x=".5" y=".5" width="13" height="13" rx="2" fill="#fff"/><path d="M3 7.200l2.700 2.700L11 4" stroke-width="1.300"/></svg>
<span class="t" style="transform:scaleX(0.860);transform-origin:0 0;max-width:101px;overflow-x:clip;left:463px;top:97px;font-size:12px;color:#222">อัปเดตสไลด์อยู่เสมอ</span>
<svg style="left:444px;top:128px" width="14" height="14" viewBox="0 0 14 14" fill="none" stroke="#d0d0d0" stroke-width="1"><rect x=".5" y=".5" width="13" height="13" rx="2" fill="#f7f7f7"/><path d="M3 7.200l2.700 2.700L11 4" stroke-width="1.300"/></svg>
<span class="t" style="transform:scaleX(0.871);transform-origin:0 0;max-width:71px;overflow-x:clip;left:463px;top:129px;font-size:12px;color:#c4c4c4">เล่นคำบรรยาย</span>
<svg style="left:560px;top:96px" width="14" height="14" viewBox="0 0 14 14" fill="none" stroke="#d0d0d0" stroke-width="1"><rect x=".5" y=".5" width="13" height="13" rx="2" fill="#f7f7f7"/><path d="M3 7.200l2.700 2.700L11 4" stroke-width="1.300"/></svg>
<span class="t" style="transform:scaleX(0.942);transform-origin:0 0;max-width:87px;overflow-x:clip;left:578px;top:97px;font-size:12px;color:#c4c4c4">ใช้การกำหนดเวลา</span>
<svg style="left:560px;top:128px" width="14" height="14" viewBox="0 0 14 14" fill="none" stroke="#d0d0d0" stroke-width="1"><rect x=".5" y=".5" width="13" height="13" rx="2" fill="#f7f7f7"/><path d="M3 7.200l2.700 2.700L11 4" stroke-width="1.300"/></svg>
<span class="t" style="transform:scaleX(0.880);transform-origin:0 0;max-width:93px;overflow-x:clip;left:578px;top:129px;font-size:12px;color:#c4c4c4">แสดงตัวควบคุมสื่อ</span>
<span class="t" style="transform:scaleX(0.880);transform-origin:0 0;max-width:26px;overflow-x:clip;left:432px;top:162px;font-size:11.500px;color:#333">ตั้งค่า</span>
<div class="abs" style="left:673px;top:86px;width:1px;height:86px;background:#dcdcdc"></div>
<svg style="left:685px;top:97px" width="16" height="13" viewBox="0 0 16 13" fill="none" stroke="#c4c4c4" stroke-width="1.100"><rect x=".6" y=".6" width="14.800" height="9" fill="#f3f3f3"/><path d="M8 9.600v2.400M5 12.300h6"/></svg>
<span class="t" style="transform:scaleX(0.895);transform-origin:0 0;max-width:39px;overflow-x:clip;left:704px;top:98px;font-size:12px;color:#bdbdbd">จอภาพ:</span>
<div class="abs" style="left:744px;top:91px;width:148px;height:24px;background:#f2f2f2;border:1px solid #e2e2e2;border-radius:4px"></div>
<span class="t" style="transform:scaleX(0.881);transform-origin:0 0;max-width:43px;overflow-x:clip;left:748px;top:96px;font-size:12px;color:#222">อัตโนมัติ</span>
<svg style="left:881px;top:101px" width="7" height="5" viewBox="0 0 7 5" fill="none" stroke="#bbb" stroke-width="1"><path d="M.5.5l3 3 3-3"/></svg>
<svg style="left:685px;top:128px" width="14" height="14" viewBox="0 0 14 14" fill="none" stroke="#333" stroke-width="1"><rect x=".5" y=".5" width="13" height="13" rx="2" fill="#fff"/><path d="M3 7.200l2.700 2.700L11 4" stroke-width="1.300"/></svg>
<span class="t" style="transform:scaleX(0.912);transform-origin:0 0;max-width:114px;overflow-x:clip;left:703px;top:129px;font-size:12px;color:#222">ใช้มุมมองของผู้นำเสนอ</span>
<span class="t" style="transform:scaleX(0.909);transform-origin:0 0;max-width:34px;overflow-x:clip;left:771px;top:162px;font-size:11.500px;color:#333">จอภาพ</span>
<div class="abs" style="left:899px;top:86px;width:1px;height:86px;background:#dcdcdc"></div>
<svg style="left:1506px;top:161px" width="10" height="6" viewBox="0 0 10 6" fill="none" stroke="#222" stroke-width="1.200"><path d="M.8.800l4.200 4.200 4.200-4.200"/></svg>

  <!-- lower area -->
  <div class="abs" style="left:0;top:178px;width:1534px;height:664px;overflow:hidden" id="low">
  <div class="abs" style="left:221px;top:0;width:20px;height:664px;background:rgba(255,255,255,.35)"></div>
<div class="abs" style="left:241px;top:0;width:2px;height:664px;background:rgba(255,255,255,.6)"></div>
<svg style="left:225px;top:5px" width="10" height="8" viewBox="0 0 10 8"><path d="M5 .5L9.500 7.500h-9z" fill="#777"/></svg>
<div class="abs" style="left:226px;top:594px;width:8px;height:72px;background:#6c6c6c;border-radius:4px"></div>
<div class="abs" style="left:36px;top:-10px;width:163px;height:13px;background:#000;border-radius:3px"></div>
<span class="t" style="transform:scaleX(0.889);transform-origin:0 0;max-width:19px;overflow-x:clip;left:4px;top:19px;font-size:16px;color:#444">32</span>
<div class="abs" style="left:36px;top:23px;width:163px;height:92px;background:#000;border-radius:3px;overflow:hidden"><svg style="left:0;top:0" width="163" height="92" viewBox="0 -76 1201 675" fill="none" stroke="#fff" stroke-width="8"><path d="M-45 40Q40 62 130 36Q230 6 300 -80"/><path d="M1005 670Q1062 524 1245 488"/><circle cx="1120" cy="531" r="12" fill="#f3c33c" stroke="none"/><circle cx="979" cy="544" r="9" fill="#fff" stroke="none"/></svg><span class="t" style="transform:scaleX(0.901);transform-origin:0 0;max-width:77px;overflow-x:clip;left:41.500px;top:4.500px;font-size:8px;font-weight:bold;color:#fff">โปรแกรม ตัดต่อ Auto</span><div class="abs" style="left:147px;top:8px;width:2px;height:2px;background:#888;border-radius:1px"></div><div class="abs" style="left:153px;top:8px;width:2px;height:2px;background:#888;border-radius:1px"></div><div class="abs" style="left:32px;top:16px;width:99px;height:59px;background:#fcfcfc"><div class="abs" style="left:0;top:0;width:99px;height:7px;background:#f0f2f4"></div><div class="abs" style="left:7.0px;top:17px;width:11px;height:11px;border-radius:6px;background:#2a2320;border:1.500px solid #6a4a3a"></div><div class="abs" style="left:11.0px;top:20.5px;width:0;height:0;border-left:4px solid #fff;border-top:2.500px solid transparent;border-bottom:2.500px solid transparent"></div><div class="abs" style="left:30.5px;top:17px;width:11px;height:11px;border-radius:6px;background:#2a2320;border:1.500px solid #6a4a3a"></div><div class="abs" style="left:34.5px;top:20.5px;width:0;height:0;border-left:4px solid #fff;border-top:2.500px solid transparent;border-bottom:2.500px solid transparent"></div><div class="abs" style="left:54.0px;top:17px;width:11px;height:11px;border-radius:6px;background:#2a2320;border:1.500px solid #6a4a3a"></div><div class="abs" style="left:58.0px;top:20.5px;width:0;height:0;border-left:4px solid #fff;border-top:2.500px solid transparent;border-bottom:2.500px solid transparent"></div><div class="abs" style="left:77.5px;top:17px;width:11px;height:11px;border-radius:6px;background:#2a2320;border:1.500px solid #6a4a3a"></div><div class="abs" style="left:81.5px;top:20.5px;width:0;height:0;border-left:4px solid #fff;border-top:2.500px solid transparent;border-bottom:2.500px solid transparent"></div><div class="abs" style="left:7.0px;top:41px;width:11px;height:11px;border-radius:6px;background:#2a2320;border:1.500px solid #6a4a3a"></div><div class="abs" style="left:11.0px;top:44.5px;width:0;height:0;border-left:4px solid #fff;border-top:2.500px solid transparent;border-bottom:2.500px solid transparent"></div><div class="abs" style="left:30.5px;top:41px;width:11px;height:11px;border-radius:6px;background:#2a2320;border:1.500px solid #6a4a3a"></div><div class="abs" style="left:34.5px;top:44.5px;width:0;height:0;border-left:4px solid #fff;border-top:2.500px solid transparent;border-bottom:2.500px solid transparent"></div><div class="abs" style="left:54.0px;top:41px;width:11px;height:11px;border-radius:6px;background:#2a2320;border:1.500px solid #6a4a3a"></div><div class="abs" style="left:58.0px;top:44.5px;width:0;height:0;border-left:4px solid #fff;border-top:2.500px solid transparent;border-bottom:2.500px solid transparent"></div><div class="abs" style="left:77.5px;top:41px;width:11px;height:11px;border-radius:6px;background:#2a2320;border:1.500px solid #6a4a3a"></div><div class="abs" style="left:81.5px;top:44.5px;width:0;height:0;border-left:4px solid #fff;border-top:2.500px solid transparent;border-bottom:2.500px solid transparent"></div></div><span class="t" style="transform:scaleX(0.958);transform-origin:0 0;max-width:60px;overflow-x:clip;left:42.9px;top:82.5px;font-size:7.500px;font-weight:bold;color:#fff">เสียงจากโปรแกรม</span></div>
<span class="t" style="transform:scaleX(0.889);transform-origin:0 0;max-width:19px;overflow-x:clip;left:4px;top:133px;font-size:16px;color:#444">33</span>
<div class="abs" style="left:36px;top:137px;width:163px;height:92px;background:#000;border-radius:3px;overflow:hidden"><svg style="left:0;top:0" width="163" height="92" viewBox="0 -76 1201 675" fill="none" stroke="#fff" stroke-width="8"><path d="M-45 40Q40 62 130 36Q230 6 300 -80"/><path d="M1005 670Q1062 524 1245 488"/><circle cx="1120" cy="531" r="12" fill="#f3c33c" stroke="none"/><circle cx="979" cy="544" r="9" fill="#fff" stroke="none"/></svg><span class="t" style="transform:scaleX(0.901);transform-origin:0 0;max-width:77px;overflow-x:clip;left:41.500px;top:4.500px;font-size:8px;font-weight:bold;color:#fff">โปรแกรม ตัดต่อ Auto</span><div class="abs" style="left:147px;top:8px;width:2px;height:2px;background:#888;border-radius:1px"></div><div class="abs" style="left:153px;top:8px;width:2px;height:2px;background:#888;border-radius:1px"></div><div class="abs" style="left:24px;top:15px;width:103px;height:63px;background:#fdfdfd"><div class="abs" style="left:3px;top:11px;width:13px;height:10px;background:#f3cf5e;border-radius:1px"></div><div class="abs" style="left:20px;top:11px;width:13px;height:10px;background:#f3cf5e;border-radius:1px"></div><div class="abs" style="left:37px;top:11px;width:13px;height:10px;background:#f3cf5e;border-radius:1px"></div><div class="abs" style="left:54px;top:11px;width:13px;height:10px;background:#f3cf5e;border-radius:1px"></div><div class="abs" style="left:71px;top:11px;width:13px;height:10px;background:#f3cf5e;border-radius:1px"></div><div class="abs" style="left:88px;top:11px;width:13px;height:10px;background:#f3cf5e;border-radius:1px"></div><div class="abs" style="left:3px;top:29px;width:13px;height:10px;background:#f3cf5e;border-radius:1px"></div><div class="abs" style="left:20px;top:29px;width:13px;height:10px;background:#f3cf5e;border-radius:1px"></div><div class="abs" style="left:37px;top:29px;width:13px;height:10px;background:#f3cf5e;border-radius:1px"></div><div class="abs" style="left:54px;top:29px;width:13px;height:10px;background:#f3cf5e;border-radius:1px"></div><div class="abs" style="left:73px;top:26px;width:9px;height:15px;background:#9c6a58"></div><div class="abs" style="left:91px;top:26px;width:9px;height:15px;background:#7d93c4"></div><div class="abs" style="left:6px;top:45px;width:9px;height:15px;background:#3a3a36"></div><div class="abs" style="left:23px;top:45px;width:9px;height:15px;background:#3d3a30"></div><div class="abs" style="left:40px;top:45px;width:9px;height:15px;background:#8b8e92"></div><div class="abs" style="left:57px;top:45px;width:9px;height:15px;background:#5b7fb8"></div><div class="abs" style="left:74px;top:45px;width:9px;height:15px;background:#4a5a78"></div></div><span class="t" style="transform:scaleX(0.922);transform-origin:0 0;max-width:65px;overflow-x:clip;left:42.9px;top:82.5px;font-size:7.500px;font-weight:bold;color:#fff">VDO Long ของจริง</span></div>
<span class="t" style="transform:scaleX(0.889);transform-origin:0 0;max-width:19px;overflow-x:clip;left:4px;top:247px;font-size:16px;color:#444">34</span>
<div class="abs" style="left:36px;top:251px;width:163px;height:92px;background:#000;border-radius:3px;overflow:hidden"><svg style="left:0;top:0" width="163" height="92" viewBox="0 -76 1201 675" fill="none" stroke="#fff" stroke-width="8"><path d="M-45 40Q40 62 130 36Q230 6 300 -80"/><path d="M1005 670Q1062 524 1245 488"/><circle cx="1120" cy="531" r="12" fill="#f3c33c" stroke="none"/><circle cx="979" cy="544" r="9" fill="#fff" stroke="none"/></svg><span class="t" style="transform:scaleX(0.901);transform-origin:0 0;max-width:77px;overflow-x:clip;left:41.500px;top:4.500px;font-size:8px;font-weight:bold;color:#fff">โปรแกรม ตัดต่อ Auto</span><div class="abs" style="left:147px;top:8px;width:2px;height:2px;background:#888;border-radius:1px"></div><div class="abs" style="left:153px;top:8px;width:2px;height:2px;background:#888;border-radius:1px"></div><div class="abs" style="left:9px;top:9px;width:68px;height:71px;background:#e9e9e9;border:1px solid #f8f8f8"><div class="abs" style="left:4px;top:6px;width:50px;height:1px;background:#aaa"></div><div class="abs" style="left:4px;top:11px;width:38px;height:1px;background:#aaa"></div><div class="abs" style="left:4px;top:16px;width:56px;height:1px;background:#aaa"></div><div class="abs" style="left:4px;top:21px;width:30px;height:1px;background:#aaa"></div><div class="abs" style="left:4px;top:26px;width:44px;height:1px;background:#aaa"></div><div class="abs" style="left:4px;top:31px;width:52px;height:1px;background:#aaa"></div><div class="abs" style="left:4px;top:36px;width:34px;height:1px;background:#aaa"></div><div class="abs" style="left:4px;top:41px;width:48px;height:1px;background:#aaa"></div><div class="abs" style="left:4px;top:46px;width:40px;height:1px;background:#aaa"></div><div class="abs" style="left:4px;top:51px;width:55px;height:1px;background:#aaa"></div><div class="abs" style="left:4px;top:56px;width:30px;height:1px;background:#aaa"></div><div class="abs" style="left:4px;top:61px;width:46px;height:1px;background:#aaa"></div></div><div class="abs" style="left:80px;top:14px;width:37px;height:44px;background:#fafafa"><div class="abs" style="left:3px;top:4.0px;width:26px;height:1px;background:#999"></div><div class="abs" style="left:3px;top:7.3px;width:30px;height:1px;background:#999"></div><div class="abs" style="left:3px;top:10.6px;width:22px;height:1px;background:#999"></div><div class="abs" style="left:3px;top:13.899999999999999px;width:28px;height:1px;background:#999"></div><div class="abs" style="left:3px;top:17.2px;width:18px;height:1px;background:#999"></div><div class="abs" style="left:3px;top:20.5px;width:30px;height:1px;background:#999"></div><div class="abs" style="left:3px;top:23.799999999999997px;width:24px;height:1px;background:#999"></div><div class="abs" style="left:3px;top:27.099999999999998px;width:20px;height:1px;background:#999"></div><div class="abs" style="left:3px;top:30.4px;width:27px;height:1px;background:#999"></div><div class="abs" style="left:3px;top:33.7px;width:15px;height:1px;background:#999"></div><div class="abs" style="left:3px;top:37.0px;width:22px;height:1px;background:#999"></div></div><span class="t" style="transform:scaleX(0.969);transform-origin:0 0;max-width:66px;overflow-x:clip;left:42.9px;top:82.5px;font-size:7.500px;font-weight:bold;color:#fff">โปรแกรมเวลาทำงาน</span></div>
<span class="t" style="transform:scaleX(0.889);transform-origin:0 0;max-width:19px;overflow-x:clip;left:4px;top:361px;font-size:16px;color:#444">35</span>
<div class="abs" style="left:36px;top:365px;width:163px;height:92px;background:#000;border-radius:3px;overflow:hidden"><svg style="left:0;top:0" width="163" height="92" viewBox="0 -76 1201 675" fill="none" stroke="#fff" stroke-width="8"><path d="M-45 40Q40 62 130 36Q230 6 300 -80"/><path d="M1005 670Q1062 524 1245 488"/><circle cx="1120" cy="531" r="12" fill="#f3c33c" stroke="none"/><circle cx="979" cy="544" r="9" fill="#fff" stroke="none"/></svg><span class="t" style="transform:scaleX(0.901);transform-origin:0 0;max-width:77px;overflow-x:clip;left:41.500px;top:4.500px;font-size:8px;font-weight:bold;color:#fff">โปรแกรม ตัดต่อ Auto</span><div class="abs" style="left:147px;top:8px;width:2px;height:2px;background:#888;border-radius:1px"></div><div class="abs" style="left:153px;top:8px;width:2px;height:2px;background:#888;border-radius:1px"></div><div class="abs" style="left:42px;top:46px;width:70px;height:26px;background:#fbfbfb"></div><div class="abs" style="left:26px;top:36px;width:92px;height:20px;background:#f7f7f7"></div><div class="abs" style="left:26px;top:10px;width:107px;height:35px;background:#fdfdfd"><div class="abs" style="left:0;top:0;width:107px;height:6px;background:#eef0f2"></div><div class="abs" style="left:11px;top:14px;width:10px;height:9px;background:#f3cf5e"></div><div class="abs" style="left:25px;top:12px;width:7px;height:11px;background:#6d83b0"></div><div class="abs" style="left:44px;top:14px;width:9px;height:8px;background:#f3cf5e"></div><div class="abs" style="left:57px;top:12px;width:7px;height:11px;background:#8a6a5a"></div></div><div class="abs" style="left:47px;top:54px;width:10px;height:8px;background:#e8c24e"></div><div class="abs" style="left:62px;top:51px;width:6px;height:11px;background:#333"></div><span class="t" style="transform:scaleX(0.960);transform-origin:0 0;max-width:125px;overflow-x:clip;left:19.4px;top:77.5px;font-size:7.500px;font-weight:bold;color:#fff">โปรแกรมจะย้ายจาก vdo_long ไป tmp</span></div>
<span class="t" style="transform:scaleX(0.889);transform-origin:0 0;max-width:19px;overflow-x:clip;left:4px;top:475px;font-size:16px;color:#c43e1c">36</span>
<div class="abs" style="left:32px;top:475px;width:171px;height:100px;border:3px solid #7a1a22;border-radius:6px;background:#f6d8d8"></div>
<div class="abs" style="left:36px;top:479px;width:163px;height:92px;background:#000;border-radius:3px;overflow:hidden"><svg style="left:0;top:0" width="163" height="92" viewBox="0 -76 1201 675" fill="none" stroke="#fff" stroke-width="8"><path d="M-45 40Q40 62 130 36Q230 6 300 -80"/><path d="M1005 670Q1062 524 1245 488"/><circle cx="1120" cy="531" r="12" fill="#f3c33c" stroke="none"/><circle cx="979" cy="544" r="9" fill="#fff" stroke="none"/></svg><span class="t" style="transform:scaleX(0.901);transform-origin:0 0;max-width:77px;overflow-x:clip;left:41.500px;top:4.500px;font-size:8px;font-weight:bold;color:#fff">โปรแกรม ตัดต่อ Auto</span><div class="abs" style="left:147px;top:8px;width:2px;height:2px;background:#888;border-radius:1px"></div><div class="abs" style="left:153px;top:8px;width:2px;height:2px;background:#888;border-radius:1px"></div><div class="abs" style="left:8px;top:18px;width:112px;height:63px;background:#fdfdfd"><div class="abs" style="left:0;top:0;width:112px;height:3px;background:#e6ecef"></div><div class="abs" style="left:5.0px;top:10.0px;width:4px;height:7px;background:#a9705c"></div><div class="abs" style="left:14.14px;top:10.0px;width:4px;height:7px;background:#a9705c"></div><div class="abs" style="left:23.28px;top:10.0px;width:4px;height:7px;background:#a9705c"></div><div class="abs" style="left:32.42px;top:10.0px;width:4px;height:7px;background:#a9705c"></div><div class="abs" style="left:41.56px;top:10.0px;width:4px;height:7px;background:#7d90bb"></div><div class="abs" style="left:50.7px;top:10.0px;width:4px;height:7px;background:#7d90bb"></div><div class="abs" style="left:59.84px;top:10.0px;width:4px;height:7px;background:#7d90bb"></div><div class="abs" style="left:68.98px;top:10.0px;width:4px;height:7px;background:#7d90bb"></div><div class="abs" style="left:78.12px;top:10.0px;width:4px;height:7px;background:#7d90bb"></div><div class="abs" style="left:87.26px;top:10.0px;width:4px;height:7px;background:#7d90bb"></div><div class="abs" style="left:96.4px;top:10.0px;width:4px;height:7px;background:#7d90bb"></div><div class="abs" style="left:105.54px;top:10.0px;width:4px;height:7px;background:#7d90bb"></div><div class="abs" style="left:5.0px;top:22.2px;width:4px;height:7px;background:#8090b4"></div><div class="abs" style="left:14.14px;top:22.2px;width:4px;height:7px;background:#8090b4"></div><div class="abs" style="left:23.28px;top:22.2px;width:4px;height:7px;background:#8090b4"></div><div class="abs" style="left:32.42px;top:22.2px;width:4px;height:7px;background:#8090b4"></div><div class="abs" style="left:41.56px;top:22.2px;width:4px;height:7px;background:#8090b4"></div><div class="abs" style="left:50.7px;top:22.2px;width:4px;height:7px;background:#3a3a38"></div><div class="abs" style="left:59.84px;top:22.2px;width:4px;height:7px;background:#3a3a38"></div><div class="abs" style="left:68.98px;top:22.2px;width:4px;height:7px;background:#3a3a38"></div><div class="abs" style="left:78.12px;top:22.2px;width:4px;height:7px;background:#3a3a38"></div><div class="abs" style="left:87.26px;top:22.2px;width:4px;height:7px;background:#3a3a38"></div><div class="abs" style="left:96.4px;top:22.2px;width:4px;height:7px;background:#3a3a38"></div><div class="abs" style="left:105.54px;top:22.2px;width:4px;height:7px;background:#3a3a38"></div><div class="abs" style="left:5.0px;top:34.4px;width:4px;height:7px;background:#33332f"></div><div class="abs" style="left:14.14px;top:34.4px;width:4px;height:7px;background:#33332f"></div><div class="abs" style="left:23.28px;top:34.4px;width:4px;height:7px;background:#33332f"></div><div class="abs" style="left:32.42px;top:34.4px;width:4px;height:7px;background:#33332f"></div><div class="abs" style="left:41.56px;top:34.4px;width:4px;height:7px;background:#33332f"></div><div class="abs" style="left:50.7px;top:34.4px;width:4px;height:7px;background:#33332f"></div><div class="abs" style="left:59.84px;top:34.4px;width:4px;height:7px;background:#8d9096"></div><div class="abs" style="left:68.98px;top:34.4px;width:4px;height:7px;background:#8d9096"></div><div class="abs" style="left:78.12px;top:34.4px;width:4px;height:7px;background:#8d9096"></div><div class="abs" style="left:87.26px;top:34.4px;width:4px;height:7px;background:#8d9096"></div><div class="abs" style="left:96.4px;top:34.4px;width:4px;height:7px;background:#8d9096"></div><div class="abs" style="left:105.54px;top:34.4px;width:4px;height:7px;background:#8d9096"></div><div class="abs" style="left:5.0px;top:46.599999999999994px;width:4px;height:7px;background:#8a8d92"></div><div class="abs" style="left:14.14px;top:46.599999999999994px;width:4px;height:7px;background:#8a8d92"></div><div class="abs" style="left:23.28px;top:46.599999999999994px;width:4px;height:7px;background:#8a8d92"></div><div class="abs" style="left:32.42px;top:46.599999999999994px;width:4px;height:7px;background:#8a8d92"></div><div class="abs" style="left:41.56px;top:46.599999999999994px;width:4px;height:7px;background:#8a8d92"></div><div class="abs" style="left:50.7px;top:46.599999999999994px;width:4px;height:7px;background:#8a8d92"></div><div class="abs" style="left:59.84px;top:46.599999999999994px;width:4px;height:7px;background:#a57868"></div><div class="abs" style="left:68.98px;top:46.599999999999994px;width:4px;height:7px;background:#a57868"></div><div class="abs" style="left:78.12px;top:46.599999999999994px;width:4px;height:7px;background:#a57868"></div><div class="abs" style="left:87.26px;top:46.599999999999994px;width:4px;height:7px;background:#a57868"></div><div class="abs" style="left:96.4px;top:46.599999999999994px;width:4px;height:7px;background:#fff"></div><div class="abs" style="left:96px;top:48px;width:4px;height:4px;border-radius:2px;background:#222"></div></div><span class="t" style="transform:scaleX(0.936);transform-origin:0 0;max-width:79px;overflow-x:clip;left:42.8px;top:82.5px;font-size:7.500px;font-weight:bold;color:#fff">แล้วจะซอย ลง tmp_seg</span></div>
<span class="t" style="transform:scaleX(0.889);transform-origin:0 0;max-width:19px;overflow-x:clip;left:4px;top:589px;font-size:16px;color:#444">37</span>
<div class="abs" style="left:36px;top:593px;width:163px;height:92px;background:#000;border-radius:3px;overflow:hidden"><svg style="left:0;top:0" width="163" height="92" viewBox="0 -76 1201 675" fill="none" stroke="#fff" stroke-width="8"><path d="M-45 40Q40 62 130 36Q230 6 300 -80"/><path d="M1005 670Q1062 524 1245 488"/><circle cx="1120" cy="531" r="12" fill="#f3c33c" stroke="none"/><circle cx="979" cy="544" r="9" fill="#fff" stroke="none"/></svg><span class="t" style="transform:scaleX(0.901);transform-origin:0 0;max-width:77px;overflow-x:clip;left:41.500px;top:4.500px;font-size:8px;font-weight:bold;color:#fff">โปรแกรม ตัดต่อ Auto</span><div class="abs" style="left:147px;top:8px;width:2px;height:2px;background:#888;border-radius:1px"></div><div class="abs" style="left:153px;top:8px;width:2px;height:2px;background:#888;border-radius:1px"></div><div class="abs" style="left:12px;top:17px;width:145px;height:41px;background:#fdfdfd"><div class="abs" style="left:5px;top:7px;width:26px;height:6px;background:#f08080;border-radius:0 0 6px 6px"></div><div class="abs" style="left:31px;top:7px;width:27px;height:6px;background:#f08080;border-radius:0 0 6px 6px"></div><div class="abs" style="left:58px;top:7px;width:17px;height:6px;background:#74d4cc;border-radius:0 0 6px 6px"></div><div class="abs" style="left:75px;top:7px;width:16px;height:6px;background:#5b8def;border-radius:0 0 6px 6px"></div><div class="abs" style="left:91px;top:7px;width:17px;height:6px;background:#b58af0;border-radius:0 0 6px 6px"></div><div class="abs" style="left:108px;top:7px;width:16px;height:6px;background:#7ed07a;border-radius:0 0 6px 6px"></div><div class="abs" style="left:124px;top:7px;width:17px;height:6px;background:#f0a84a;border-radius:0 0 6px 6px"></div><div class="abs" style="left:5px;top:18px;width:3px;height:4px;background:#e06060"></div><div class="abs" style="left:20px;top:18px;width:3px;height:4px;background:#4aa878"></div><div class="abs" style="left:5px;top:24.0px;width:30px;height:1px;background:#888"></div><div class="abs" style="left:5px;top:26.2px;width:38px;height:1px;background:#888"></div><div class="abs" style="left:5px;top:28.4px;width:36px;height:1px;background:#888"></div><div class="abs" style="left:5px;top:30.6px;width:40px;height:1px;background:#888"></div><div class="abs" style="left:5px;top:32.8px;width:38px;height:1px;background:#888"></div><div class="abs" style="left:5px;top:35.0px;width:36px;height:1px;background:#888"></div></div></div>
<div class="abs" style="left:281px;top:0px;width:1200px;height:599px;background:#000"></div>
<svg style="left:281px;top:0px" width="1201" height="599" viewBox="0 0 1201 599" fill="none" stroke="#fff" stroke-width="2.600"><path d="M-45 40Q40 62 130 36Q190 18 222 -4"/><path d="M1005 670Q1062 524 1245 488"/><circle cx="1120" cy="531" r="11.500" fill="#f2c23a" stroke="none"/><path d="M1114 531h11.500M1121 526.500l4.500 4.500-4.500 4.500" stroke="#222" stroke-width="1.800" stroke-linecap="round" stroke-linejoin="round"/><path d="M978 528q1.500 14.500 16 16q-14.500 1.500-16 16q-1.500-14.500-16-16q14.500-1.500 16-16z" fill="#fff" filter="url(#glow)" stroke="none"/><defs><filter id="glow" x="-50%" y="-50%" width="200%" height="200%"><feGaussianBlur stdDeviation="1.200" result="b"/><feMerge><feMergeNode in="b"/><feMergeNode in="SourceGraphic"/></feMerge></filter></defs></svg>
<span class="t" style="transform:scaleX(1.043);transform-origin:0 0;max-width:232px;overflow-x:clip;left:597px;top:523px;font-size:45px;font-weight:600;color:#fff;font-family:'Mali','Itim','Liberation Sans','Noto Sans Thai',sans-serif;line-height:58px">แล้วจะซอย</span>
<span class="t" style="transform:scaleX(0.975);transform-origin:0 0;max-width:61px;overflow-x:clip;left:853.5px;top:523px;font-size:45px;font-weight:600;color:#fff;font-family:'Mali','Itim','Liberation Sans','Noto Sans Thai',sans-serif;line-height:58px">ลง</span>
<span class="t" style="transform:scaleX(1.019);transform-origin:0 0;max-width:207px;overflow-x:clip;left:924px;top:520px;font-size:50px;font-weight:600;color:#fff;font-family:'Mali','Itim','Liberation Sans','Noto Sans Thai',sans-serif;line-height:58px">tmp_seg</span>
<svg style="left:924px;top:572px" width="208" height="5" viewBox="0 0 208 5" fill="none" stroke="#e8403c" stroke-width="1.200"><path d="M0 3l2 -2l2 2l2 -2l2 2l2 -2l2 2l2 -2l2 2l2 -2l2 2l2 -2l2 2l2 -2l2 2l2 -2l2 2l2 -2l2 2l2 -2l2 2l2 -2l2 2l2 -2l2 2l2 -2l2 2l2 -2l2 2l2 -2l2 2l2 -2l2 2l2 -2l2 2l2 -2l2 2l2 -2l2 2l2 -2l2 2l2 -2l2 2l2 -2l2 2l2 -2l2 2l2 -2l2 2l2 -2l2 2l2 -2l2 2l2 -2l2 2l2 -2l2 2l2 -2l2 2l2 -2l2 2l2 -2l2 2l2 -2l2 2l2 -2l2 2l2 -2l2 2l2 -2l2 2l2 -2l2 2l2 -2l2 2l2 -2l2 2l2 -2l2 2l2 -2l2 2l2 -2l2 2l2 -2l2 2l2 -2l2 2l2 -2l2 2l2 -2l2 2l2 -2l2 2l2 -2l2 2l2 -2l2 2l2 -2l2 2l2 -2l2 2l2 -2l2 2l2 -2l2 2"/></svg>
<svg style="left:1520px;top:5px" width="10" height="8" viewBox="0 0 10 8"><path d="M5 .5L9.500 7.500h-9z" fill="#777"/></svg>
<svg style="left:1520px;top:655px" width="10" height="8" viewBox="0 0 10 8"><path d="M5 7.500L9.500 .5h-9z" fill="#777"/></svg>
<div class="abs" style="left:1520px;top:580px;width:10px;height:17px;background:#707070;border-radius:5px"></div>
<div class="abs" id="emb" style="left:341px;top:57px;width:823px;height:465px;background:#fff;overflow:hidden;font-family:'Liberation Sans','Noto Sans Thai Looped','Noto Sans Thai','Loma',sans-serif"><div class="abs" style="left:0;top:0;width:823px;height:11px;background:linear-gradient(90deg,#fbf9f1 0,#fbf9f1 66px,#f0e3ad 66px,#e9e2c4 35%,#d3e3e8 60%,#cfe3ea 100%)"></div>
<span class="t" style="left:56px;top:-2px;font-size:8px;color:#555">x</span><span class="t" style="left:83px;top:-3px;font-size:9px;color:#555">+</span><span class="t" style="left:812px;top:-3px;font-size:8px;color:#444">x</span>
<div class="abs" style="left:0;top:11px;width:823px;height:30px;background:linear-gradient(90deg,#fbf8ec 0,#fdfcf8 30%,#f6f9fb 70%,#f2f7f9 100%)"></div>
<svg style="left:15px;top:20px" width="10" height="10" viewBox="0 0 16 16" fill="none" stroke="#555" stroke-width="1.800"><path d="M13.500 8a5.500 5.500 0 1 1-1.800-4M13.700 1.500v3h-3"/></svg>
<div class="abs" style="left:40px;top:15px;width:552px;height:22px;background:#fff;border-radius:2px"></div>
<svg style="left:47px;top:20px" width="11" height="10" viewBox="0 0 16 15" fill="none" stroke="#444" stroke-width="1.600"><rect x="1" y="1" width="14" height="9.500" rx="1.500"/><path d="M5 13.500h6M8 10.500v3"/></svg>
<svg style="left:68px;top:22px" width="4" height="7" viewBox="0 0 4 7" fill="none" stroke="#555" stroke-width=".9"><path d="M.5.5l3 3-3 3"/></svg>
<span class="t" style="transform:scaleX(0.895);transform-origin:0 0;max-width:39px;overflow-x:clip;left:82px;top:21px;font-size:8.500px;color:#333">พีซีเครื่องนี้</span>
<svg style="left:126px;top:22px" width="4" height="7" viewBox="0 0 4 7" fill="none" stroke="#555" stroke-width=".9"><path d="M.5.5l3 3-3 3"/></svg>
<span class="t" style="transform:scaleX(0.897);transform-origin:0 0;max-width:30px;overflow-x:clip;left:140px;top:21px;font-size:8.500px;color:#333">OS (C:)</span>
<svg style="left:176px;top:22px" width="4" height="7" viewBox="0 0 4 7" fill="none" stroke="#555" stroke-width=".9"><path d="M.5.5l3 3-3 3"/></svg>
<span class="t" style="transform:scaleX(1.000);transform-origin:0 0;max-width:42px;overflow-x:clip;left:190px;top:21px;font-size:8.500px;color:#333">All Product</span>
<svg style="left:240px;top:22px" width="4" height="7" viewBox="0 0 4 7" fill="none" stroke="#555" stroke-width=".9"><path d="M.5.5l3 3-3 3"/></svg>
<span class="t" style="transform:scaleX(0.923);transform-origin:0 0;max-width:53px;overflow-x:clip;left:254px;top:21px;font-size:8.500px;color:#333">80001 ขอหอม</span>
<svg style="left:313px;top:22px" width="4" height="7" viewBox="0 0 4 7" fill="none" stroke="#555" stroke-width=".9"><path d="M.5.5l3 3-3 3"/></svg>
<span class="t" style="transform:scaleX(1.143);transform-origin:0 0;max-width:15px;overflow-x:clip;left:327px;top:21px;font-size:8.500px;color:#333">tmp</span>
<svg style="left:353px;top:22px" width="4" height="7" viewBox="0 0 4 7" fill="none" stroke="#555" stroke-width=".9"><path d="M.5.5l3 3-3 3"/></svg>
<span class="t" style="transform:scaleX(0.970);transform-origin:0 0;max-width:34px;overflow-x:clip;left:367px;top:21px;font-size:8.500px;color:#333">tmp_seg</span>
<div class="abs" style="left:596px;top:15px;width:224px;height:22px;background:#fdfefe;border-radius:2px"></div>
<span class="t" style="transform:scaleX(1.017);transform-origin:0 0;max-width:60px;overflow-x:clip;left:607px;top:21px;font-size:8px;color:#666">ค้นหาใน tmp_seg</span>
<svg style="left:809px;top:21px" width="8" height="8" viewBox="0 0 13 13" fill="none" stroke="#444" stroke-width="1.600"><circle cx="5.200" cy="5.200" r="4"/><path d="M8.200 8.200l4 4"/></svg>
<div class="abs" style="left:0;top:41px;width:823px;height:25px;background:#fefefe;border-bottom:1px solid #ececec"></div>
<div class="abs" style="left:14px;top:49px;width:8px;height:9px;border:1px solid #cfdde6;border-radius:1.500px"></div>
<div class="abs" style="left:42px;top:49px;width:8px;height:9px;border:1px solid #cfdde6;border-radius:1.500px"></div>
<div class="abs" style="left:71px;top:49px;width:8px;height:9px;border:1px solid #cfdde6;border-radius:1.500px"></div>
<div class="abs" style="left:99px;top:49px;width:8px;height:9px;border:1px solid #cfdde6;border-radius:1.500px"></div>
<div class="abs" style="left:128px;top:49px;width:8px;height:9px;border:1px solid #cfdde6;border-radius:1.500px"></div>
<div class="abs" style="left:148px;top:45px;width:1px;height:18px;background:#eee"></div>
<svg style="left:158px;top:49px" width="10" height="9" viewBox="0 0 18 16" fill="none" stroke-width="1.800"><path d="M4.500 15V1.500M1 5l3.500-3.500L8 5" stroke="#444"/><path d="M12.500 1v13.500M9 11l3.500 3.500L16 11" stroke="#1a73b8"/></svg>
<span class="t" style="transform:scaleX(0.871);transform-origin:0 0;max-width:32px;overflow-x:clip;left:172px;top:50px;font-size:7.500px;color:#333">เรียงลำดับ</span>
<div class="abs" style="left:225px;top:49px;width:7px;height:6px;border:1px solid #555;border-radius:1px"></div>
<span class="t" style="left:238px;top:50px;font-size:7.500px;color:#333">ดู</span>
<svg style="left:270px;top:53px" width="9" height="2" viewBox="0 0 9 2" fill="#333"><circle cx="1" cy="1" r=".9"/><circle cx="4.500" cy="1" r=".9"/><circle cx="8" cy="1" r=".9"/></svg>
<svg style="left:774px;top:49px" width="10" height="8" viewBox="0 0 18 14" fill="none" stroke="#456" stroke-width="1.600"><rect x=".6" y=".6" width="16" height="11.500" rx="2.500"/><path d="M10.500.6v11.500" stroke="#1a86c9"/></svg>
<span class="t" style="transform:scaleX(0.743);transform-origin:0 0;max-width:36px;overflow-x:clip;left:789px;top:50px;font-size:7.500px;color:#333">รายละเอียด</span>
<span class="t" style="left:-2px;top:114px;font-size:7px;color:#555">คล</span>
<div class="abs" style="left:5px;top:154px;width:3px;height:3px;background:#999;transform:rotate(45deg)"></div>
<div class="abs" style="left:5px;top:173px;width:3px;height:3px;background:#999;transform:rotate(45deg)"></div>
<div class="abs" style="left:5px;top:192px;width:3px;height:3px;background:#999;transform:rotate(45deg)"></div>
<div class="abs" style="left:5px;top:211px;width:3px;height:3px;background:#999;transform:rotate(45deg)"></div>
<div class="abs" style="left:5px;top:230px;width:3px;height:3px;background:#999;transform:rotate(45deg)"></div>
<div class="abs" style="left:5px;top:249px;width:3px;height:3px;background:#999;transform:rotate(45deg)"></div>
<div class="abs" style="left:5px;top:268px;width:3px;height:3px;background:#999;transform:rotate(45deg)"></div>
<div class="abs" style="left:0;top:375px;width:12px;height:18px;background:#e2e2e2"></div>
<div class="abs" style="left:223px;top:160px;width:64px;height:89px;background:#e4f0fb"></div>
<div class="abs" style="left:37.8px;top:74.0px;width:29px;height:51px;background:radial-gradient(ellipse 11px 8px at 30% 90%,#cfa890 0 80%,transparent),radial-gradient(ellipse 9px 11px at 60% 62%,#f4f6fb 0 40%,#9dbde8 78%,transparent 100%),radial-gradient(ellipse 8px 10px at 32% 50%,#e6edf8 0 35%,#86abe0 80%,transparent 100%),radial-gradient(ellipse 7px 9px at 62% 32%,#ecf1f9 0 35%,#8db0e0 80%,transparent 100%),radial-gradient(ellipse 6px 9px at 84% 48%,#dfe8f6 0 35%,#8db0e0 80%,transparent 100%),radial-gradient(ellipse 6px 7px at 30% 28%,#e6edf8 0 30%,#8db0e0 80%,transparent 100%),linear-gradient(#96502f,#9a5534 70%,#8a4a2e);box-shadow:0 0 1px rgba(0,0,0,.5)"></div>
<span class="t" style="left:22.2px;width:60px;text-align:center;top:131.0px;font-size:7.600px;color:#262626;letter-spacing:-.2px;transform:scaleX(.935)">VID_20251224_13</span>
<span class="t" style="left:22.2px;width:60px;text-align:center;top:140.5px;font-size:7.600px;color:#262626;letter-spacing:-.2px;transform:scaleX(.935)">5446_lens68mm_</span>
<span class="t" style="left:22.2px;width:60px;text-align:center;top:150.0px;font-size:7.600px;color:#262626;letter-spacing:-.2px;transform:scaleX(.935)">right_seg0001</span>
<div class="abs" style="left:104.9px;top:74.0px;width:29px;height:51px;background:radial-gradient(ellipse 11px 8px at 30% 90%,#cfa890 0 80%,transparent),radial-gradient(ellipse 9px 11px at 60% 62%,#f4f6fb 0 40%,#9dbde8 78%,transparent 100%),radial-gradient(ellipse 8px 10px at 32% 50%,#e6edf8 0 35%,#86abe0 80%,transparent 100%),radial-gradient(ellipse 7px 9px at 62% 32%,#ecf1f9 0 35%,#8db0e0 80%,transparent 100%),radial-gradient(ellipse 6px 9px at 84% 48%,#dfe8f6 0 35%,#8db0e0 80%,transparent 100%),radial-gradient(ellipse 6px 7px at 30% 28%,#e6edf8 0 30%,#8db0e0 80%,transparent 100%),linear-gradient(#96502f,#9a5534 70%,#8a4a2e);box-shadow:0 0 1px rgba(0,0,0,.5)"></div>
<span class="t" style="left:89.4px;width:60px;text-align:center;top:131.0px;font-size:7.600px;color:#262626;letter-spacing:-.2px;transform:scaleX(.935)">VID_20251224_13</span>
<span class="t" style="left:89.4px;width:60px;text-align:center;top:140.5px;font-size:7.600px;color:#262626;letter-spacing:-.2px;transform:scaleX(.935)">5446_lens68mm_</span>
<span class="t" style="left:89.4px;width:60px;text-align:center;top:150.0px;font-size:7.600px;color:#262626;letter-spacing:-.2px;transform:scaleX(.935)">right_seg0002</span>
<div class="abs" style="left:172.1px;top:74.0px;width:29px;height:51px;background:radial-gradient(ellipse 11px 8px at 30% 90%,#cfa890 0 80%,transparent),radial-gradient(ellipse 9px 11px at 60% 62%,#f4f6fb 0 40%,#9dbde8 78%,transparent 100%),radial-gradient(ellipse 8px 10px at 32% 50%,#e6edf8 0 35%,#86abe0 80%,transparent 100%),radial-gradient(ellipse 7px 9px at 62% 32%,#ecf1f9 0 35%,#8db0e0 80%,transparent 100%),radial-gradient(ellipse 6px 9px at 84% 48%,#dfe8f6 0 35%,#8db0e0 80%,transparent 100%),radial-gradient(ellipse 6px 7px at 30% 28%,#e6edf8 0 30%,#8db0e0 80%,transparent 100%),linear-gradient(#96502f,#9a5534 70%,#8a4a2e);box-shadow:0 0 1px rgba(0,0,0,.5)"></div>
<span class="t" style="left:156.6px;width:60px;text-align:center;top:131.0px;font-size:7.600px;color:#262626;letter-spacing:-.2px;transform:scaleX(.935)">VID_20251224_13</span>
<span class="t" style="left:156.6px;width:60px;text-align:center;top:140.5px;font-size:7.600px;color:#262626;letter-spacing:-.2px;transform:scaleX(.935)">5446_lens68mm_</span>
<span class="t" style="left:156.6px;width:60px;text-align:center;top:150.0px;font-size:7.600px;color:#262626;letter-spacing:-.2px;transform:scaleX(.935)">right_seg0003</span>
<div class="abs" style="left:239.2px;top:74.0px;width:29px;height:51px;background:radial-gradient(ellipse 11px 8px at 30% 90%,#cfa890 0 80%,transparent),radial-gradient(ellipse 9px 11px at 60% 62%,#f4f6fb 0 40%,#9dbde8 78%,transparent 100%),radial-gradient(ellipse 8px 10px at 32% 50%,#e6edf8 0 35%,#86abe0 80%,transparent 100%),radial-gradient(ellipse 7px 9px at 62% 32%,#ecf1f9 0 35%,#8db0e0 80%,transparent 100%),radial-gradient(ellipse 6px 9px at 84% 48%,#dfe8f6 0 35%,#8db0e0 80%,transparent 100%),radial-gradient(ellipse 6px 7px at 30% 28%,#e6edf8 0 30%,#8db0e0 80%,transparent 100%),linear-gradient(#96502f,#9a5534 70%,#8a4a2e);box-shadow:0 0 1px rgba(0,0,0,.5)"></div>
<span class="t" style="left:223.7px;width:60px;text-align:center;top:131.0px;font-size:7.600px;color:#262626;letter-spacing:-.2px;transform:scaleX(.935)">VID_20251224_13</span>
<span class="t" style="left:223.7px;width:60px;text-align:center;top:140.5px;font-size:7.600px;color:#262626;letter-spacing:-.2px;transform:scaleX(.935)">5446_lens68mm_</span>
<span class="t" style="left:223.7px;width:60px;text-align:center;top:150.0px;font-size:7.600px;color:#262626;letter-spacing:-.2px;transform:scaleX(.935)">right_seg0004</span>
<div class="abs" style="left:306.4px;top:74.0px;width:29px;height:51px;background:radial-gradient(circle 5px at 58% 27%,#e9e4e0 0 60%,transparent 100%),linear-gradient(130deg,#86a2da 0 22%,#d0d0cf 22% 34%,#6e8fd2 34% 55%,#4d4e52 55% 63%,#c9c9c8 63% 72%,#7b9ad8 72% 100%);box-shadow:0 0 1px rgba(0,0,0,.5)"></div>
<span class="t" style="left:290.9px;width:60px;text-align:center;top:131.0px;font-size:7.600px;color:#262626;letter-spacing:-.2px;transform:scaleX(.935)">VID_20251226_18</span>
<span class="t" style="left:290.9px;width:60px;text-align:center;top:140.5px;font-size:7.600px;color:#262626;letter-spacing:-.2px;transform:scaleX(.935)">3927_lens68mm_</span>
<span class="t" style="left:290.9px;width:60px;text-align:center;top:150.0px;font-size:7.600px;color:#262626;letter-spacing:-.2px;transform:scaleX(.935)">right_seg0001</span>
<div class="abs" style="left:373.5px;top:74.0px;width:29px;height:51px;background:radial-gradient(circle 5px at 35% 50%,#e9e4e0 0 60%,transparent 100%),linear-gradient(120deg,#86a2da 0 22%,#d0d0cf 22% 34%,#6e8fd2 34% 55%,#4d4e52 55% 63%,#c9c9c8 63% 72%,#7b9ad8 72% 100%);box-shadow:0 0 1px rgba(0,0,0,.5)"></div>
<span class="t" style="left:358.0px;width:60px;text-align:center;top:131.0px;font-size:7.600px;color:#262626;letter-spacing:-.2px;transform:scaleX(.935)">VID_20251226_18</span>
<span class="t" style="left:358.0px;width:60px;text-align:center;top:140.5px;font-size:7.600px;color:#262626;letter-spacing:-.2px;transform:scaleX(.935)">3927_lens68mm_</span>
<span class="t" style="left:358.0px;width:60px;text-align:center;top:150.0px;font-size:7.600px;color:#262626;letter-spacing:-.2px;transform:scaleX(.935)">right_seg0002</span>
<div class="abs" style="left:440.7px;top:74.0px;width:29px;height:51px;background:radial-gradient(circle 5px at 52% 28%,#e9e4e0 0 60%,transparent 100%),linear-gradient(145deg,#86a2da 0 22%,#d0d0cf 22% 34%,#6e8fd2 34% 55%,#4d4e52 55% 63%,#c9c9c8 63% 72%,#7b9ad8 72% 100%);box-shadow:0 0 1px rgba(0,0,0,.5)"></div>
<span class="t" style="left:425.2px;width:60px;text-align:center;top:131.0px;font-size:7.600px;color:#262626;letter-spacing:-.2px;transform:scaleX(.935)">VID_20251226_18</span>
<span class="t" style="left:425.2px;width:60px;text-align:center;top:140.5px;font-size:7.600px;color:#262626;letter-spacing:-.2px;transform:scaleX(.935)">3927_lens68mm_</span>
<span class="t" style="left:425.2px;width:60px;text-align:center;top:150.0px;font-size:7.600px;color:#262626;letter-spacing:-.2px;transform:scaleX(.935)">right_seg0003</span>
<div class="abs" style="left:507.9px;top:74.0px;width:29px;height:51px;background:radial-gradient(circle 5px at 69% 51%,#e9e4e0 0 60%,transparent 100%),linear-gradient(135deg,#86a2da 0 22%,#d0d0cf 22% 34%,#6e8fd2 34% 55%,#4d4e52 55% 63%,#c9c9c8 63% 72%,#7b9ad8 72% 100%);box-shadow:0 0 1px rgba(0,0,0,.5)"></div>
<span class="t" style="left:492.4px;width:60px;text-align:center;top:131.0px;font-size:7.600px;color:#262626;letter-spacing:-.2px;transform:scaleX(.935)">VID_20251226_18</span>
<span class="t" style="left:492.4px;width:60px;text-align:center;top:140.5px;font-size:7.600px;color:#262626;letter-spacing:-.2px;transform:scaleX(.935)">3927_lens68mm_</span>
<span class="t" style="left:492.4px;width:60px;text-align:center;top:150.0px;font-size:7.600px;color:#262626;letter-spacing:-.2px;transform:scaleX(.935)">right_seg0004</span>
<div class="abs" style="left:575.0px;top:74.0px;width:29px;height:51px;background:radial-gradient(circle 5px at 46% 29%,#e9e4e0 0 60%,transparent 100%),linear-gradient(125deg,#86a2da 0 22%,#d0d0cf 22% 34%,#6e8fd2 34% 55%,#4d4e52 55% 63%,#c9c9c8 63% 72%,#7b9ad8 72% 100%);box-shadow:0 0 1px rgba(0,0,0,.5)"></div>
<span class="t" style="left:559.5px;width:60px;text-align:center;top:131.0px;font-size:7.600px;color:#262626;letter-spacing:-.2px;transform:scaleX(.935)">VID_20251226_18</span>
<span class="t" style="left:559.5px;width:60px;text-align:center;top:140.5px;font-size:7.600px;color:#262626;letter-spacing:-.2px;transform:scaleX(.935)">3927_lens68mm_</span>
<span class="t" style="left:559.5px;width:60px;text-align:center;top:150.0px;font-size:7.600px;color:#262626;letter-spacing:-.2px;transform:scaleX(.935)">right_seg0005</span>
<div class="abs" style="left:642.2px;top:74.0px;width:29px;height:51px;background:radial-gradient(circle 5px at 63% 52%,#e9e4e0 0 60%,transparent 100%),linear-gradient(140deg,#86a2da 0 22%,#d0d0cf 22% 34%,#6e8fd2 34% 55%,#4d4e52 55% 63%,#c9c9c8 63% 72%,#7b9ad8 72% 100%);box-shadow:0 0 1px rgba(0,0,0,.5)"></div>
<span class="t" style="left:626.7px;width:60px;text-align:center;top:131.0px;font-size:7.600px;color:#262626;letter-spacing:-.2px;transform:scaleX(.935)">VID_20251226_18</span>
<span class="t" style="left:626.7px;width:60px;text-align:center;top:140.5px;font-size:7.600px;color:#262626;letter-spacing:-.2px;transform:scaleX(.935)">3927_lens68mm_</span>
<span class="t" style="left:626.7px;width:60px;text-align:center;top:150.0px;font-size:7.600px;color:#262626;letter-spacing:-.2px;transform:scaleX(.935)">right_seg0006</span>
<div class="abs" style="left:709.3px;top:74.0px;width:29px;height:51px;background:radial-gradient(circle 5px at 40% 30%,#e9e4e0 0 60%,transparent 100%),linear-gradient(115deg,#86a2da 0 22%,#d0d0cf 22% 34%,#6e8fd2 34% 55%,#4d4e52 55% 63%,#c9c9c8 63% 72%,#7b9ad8 72% 100%);box-shadow:0 0 1px rgba(0,0,0,.5)"></div>
<span class="t" style="left:693.8px;width:60px;text-align:center;top:131.0px;font-size:7.600px;color:#262626;letter-spacing:-.2px;transform:scaleX(.935)">VID_20251226_18</span>
<span class="t" style="left:693.8px;width:60px;text-align:center;top:140.5px;font-size:7.600px;color:#262626;letter-spacing:-.2px;transform:scaleX(.935)">3927_lens68mm_</span>
<span class="t" style="left:693.8px;width:60px;text-align:center;top:150.0px;font-size:7.600px;color:#262626;letter-spacing:-.2px;transform:scaleX(.935)">right_seg0007</span>
<div class="abs" style="left:776.5px;top:74.0px;width:29px;height:51px;background:radial-gradient(circle 5px at 57% 53%,#e9e4e0 0 60%,transparent 100%),linear-gradient(150deg,#86a2da 0 22%,#d0d0cf 22% 34%,#6e8fd2 34% 55%,#4d4e52 55% 63%,#c9c9c8 63% 72%,#7b9ad8 72% 100%);box-shadow:0 0 1px rgba(0,0,0,.5)"></div>
<span class="t" style="left:761.0px;width:60px;text-align:center;top:131.0px;font-size:7.600px;color:#262626;letter-spacing:-.2px;transform:scaleX(.935)">VID_20251226_18</span>
<span class="t" style="left:761.0px;width:60px;text-align:center;top:140.5px;font-size:7.600px;color:#262626;letter-spacing:-.2px;transform:scaleX(.935)">3927_lens68mm_</span>
<span class="t" style="left:761.0px;width:60px;text-align:center;top:150.0px;font-size:7.600px;color:#262626;letter-spacing:-.2px;transform:scaleX(.935)">right_seg0008</span>
<div class="abs" style="left:37.8px;top:163.5px;width:29px;height:51px;background:radial-gradient(circle 5px at 34% 31%,#e9e4e0 0 60%,transparent 100%),linear-gradient(130deg,#86a2da 0 22%,#d0d0cf 22% 34%,#6e8fd2 34% 55%,#4d4e52 55% 63%,#c9c9c8 63% 72%,#7b9ad8 72% 100%);box-shadow:0 0 1px rgba(0,0,0,.5)"></div>
<span class="t" style="left:22.2px;width:60px;text-align:center;top:220.5px;font-size:7.600px;color:#262626;letter-spacing:-.2px;transform:scaleX(.935)">VID_20251226_18</span>
<span class="t" style="left:22.2px;width:60px;text-align:center;top:230.0px;font-size:7.600px;color:#262626;letter-spacing:-.2px;transform:scaleX(.935)">3927_lens68mm_</span>
<span class="t" style="left:22.2px;width:60px;text-align:center;top:239.5px;font-size:7.600px;color:#262626;letter-spacing:-.2px;transform:scaleX(.935)">right_seg0009</span>
<div class="abs" style="left:104.9px;top:163.5px;width:29px;height:51px;background:radial-gradient(circle 5px at 51% 54%,#e9e4e0 0 60%,transparent 100%),linear-gradient(120deg,#86a2da 0 22%,#d0d0cf 22% 34%,#6e8fd2 34% 55%,#4d4e52 55% 63%,#c9c9c8 63% 72%,#7b9ad8 72% 100%);box-shadow:0 0 1px rgba(0,0,0,.5)"></div>
<span class="t" style="left:89.4px;width:60px;text-align:center;top:220.5px;font-size:7.600px;color:#262626;letter-spacing:-.2px;transform:scaleX(.935)">VID_20251226_18</span>
<span class="t" style="left:89.4px;width:60px;text-align:center;top:230.0px;font-size:7.600px;color:#262626;letter-spacing:-.2px;transform:scaleX(.935)">3927_lens68mm_</span>
<span class="t" style="left:89.4px;width:60px;text-align:center;top:239.5px;font-size:7.600px;color:#262626;letter-spacing:-.2px;transform:scaleX(.935)">right_seg0010</span>
<div class="abs" style="left:172.1px;top:163.5px;width:29px;height:51px;background:radial-gradient(circle 5px at 68% 32%,#e9e4e0 0 60%,transparent 100%),linear-gradient(145deg,#86a2da 0 22%,#d0d0cf 22% 34%,#6e8fd2 34% 55%,#4d4e52 55% 63%,#c9c9c8 63% 72%,#7b9ad8 72% 100%);box-shadow:0 0 1px rgba(0,0,0,.5)"></div>
<span class="t" style="left:156.6px;width:60px;text-align:center;top:220.5px;font-size:7.600px;color:#262626;letter-spacing:-.2px;transform:scaleX(.935)">VID_20251226_18</span>
<span class="t" style="left:156.6px;width:60px;text-align:center;top:230.0px;font-size:7.600px;color:#262626;letter-spacing:-.2px;transform:scaleX(.935)">3927_lens68mm_</span>
<span class="t" style="left:156.6px;width:60px;text-align:center;top:239.5px;font-size:7.600px;color:#262626;letter-spacing:-.2px;transform:scaleX(.935)">right_seg0011</span>
<div class="abs" style="left:239.2px;top:163.5px;width:29px;height:51px;background:radial-gradient(circle 5px at 45% 55%,#e9e4e0 0 60%,transparent 100%),linear-gradient(135deg,#86a2da 0 22%,#d0d0cf 22% 34%,#6e8fd2 34% 55%,#4d4e52 55% 63%,#c9c9c8 63% 72%,#7b9ad8 72% 100%);box-shadow:0 0 1px rgba(0,0,0,.5)"></div>
<span class="t" style="left:223.7px;width:60px;text-align:center;top:220.5px;font-size:7.600px;color:#262626;letter-spacing:-.2px;transform:scaleX(.935)">VID_20251226_18</span>
<span class="t" style="left:223.7px;width:60px;text-align:center;top:230.0px;font-size:7.600px;color:#262626;letter-spacing:-.2px;transform:scaleX(.935)">3927_lens68mm_</span>
<span class="t" style="left:223.7px;width:60px;text-align:center;top:239.5px;font-size:7.600px;color:#262626;letter-spacing:-.2px;transform:scaleX(.935)">right_seg0012</span>
<div class="abs" style="left:306.4px;top:163.5px;width:29px;height:51px;background:radial-gradient(circle 5px at 62% 33%,#e9e4e0 0 60%,transparent 100%),linear-gradient(125deg,#86a2da 0 22%,#d0d0cf 22% 34%,#6e8fd2 34% 55%,#4d4e52 55% 63%,#c9c9c8 63% 72%,#7b9ad8 72% 100%);box-shadow:0 0 1px rgba(0,0,0,.5)"></div>
<span class="t" style="left:290.9px;width:60px;text-align:center;top:220.5px;font-size:7.600px;color:#262626;letter-spacing:-.2px;transform:scaleX(.935)">VID_20251226_18</span>
<span class="t" style="left:290.9px;width:60px;text-align:center;top:230.0px;font-size:7.600px;color:#262626;letter-spacing:-.2px;transform:scaleX(.935)">3927_lens68mm_</span>
<span class="t" style="left:290.9px;width:60px;text-align:center;top:239.5px;font-size:7.600px;color:#262626;letter-spacing:-.2px;transform:scaleX(.935)">right_seg0013</span>
<div class="abs" style="left:373.5px;top:163.5px;width:29px;height:51px;background:radial-gradient(circle 2px at 78% 22%,#d8b24a 0 60%,transparent 100%),radial-gradient(ellipse 6px 10px at 55% 78%,#7ea4dc 0 70%,transparent 100%),radial-gradient(ellipse 5px 13px at 50% 50%,#f0f0ee 0 70%,transparent 100%),radial-gradient(ellipse 8px 8px at 80% 60%,#c59a7c 0 60%,transparent 100%),linear-gradient(#3b3a2c,#22221e 40%,#2d2b26);box-shadow:0 0 1px rgba(0,0,0,.5)"></div>
<span class="t" style="left:358.0px;width:60px;text-align:center;top:220.5px;font-size:7.600px;color:#262626;letter-spacing:-.2px;transform:scaleX(.935)">VID_20251226_18</span>
<span class="t" style="left:358.0px;width:60px;text-align:center;top:230.0px;font-size:7.600px;color:#262626;letter-spacing:-.2px;transform:scaleX(.935)">4135_lens38mm_</span>
<span class="t" style="left:358.0px;width:60px;text-align:center;top:239.5px;font-size:7.600px;color:#262626;letter-spacing:-.2px;transform:scaleX(.935)">center_seg0001</span>
<div class="abs" style="left:440.7px;top:163.5px;width:29px;height:51px;background:radial-gradient(circle 2px at 78% 22%,#d8b24a 0 60%,transparent 100%),radial-gradient(ellipse 6px 10px at 55% 78%,#7ea4dc 0 70%,transparent 100%),radial-gradient(ellipse 5px 13px at 50% 50%,#f0f0ee 0 70%,transparent 100%),radial-gradient(ellipse 8px 8px at 80% 60%,#c59a7c 0 60%,transparent 100%),linear-gradient(#3b3a2c,#22221e 40%,#2d2b26);box-shadow:0 0 1px rgba(0,0,0,.5)"></div>
<span class="t" style="left:425.2px;width:60px;text-align:center;top:220.5px;font-size:7.600px;color:#262626;letter-spacing:-.2px;transform:scaleX(.935)">VID_20251226_18</span>
<span class="t" style="left:425.2px;width:60px;text-align:center;top:230.0px;font-size:7.600px;color:#262626;letter-spacing:-.2px;transform:scaleX(.935)">4135_lens38mm_</span>
<span class="t" style="left:425.2px;width:60px;text-align:center;top:239.5px;font-size:7.600px;color:#262626;letter-spacing:-.2px;transform:scaleX(.935)">center_seg0002</span>
<div class="abs" style="left:507.9px;top:163.5px;width:29px;height:51px;background:radial-gradient(circle 2px at 78% 22%,#d8b24a 0 60%,transparent 100%),radial-gradient(ellipse 6px 10px at 55% 78%,#7ea4dc 0 70%,transparent 100%),radial-gradient(ellipse 5px 13px at 50% 50%,#f0f0ee 0 70%,transparent 100%),radial-gradient(ellipse 8px 8px at 80% 60%,#c59a7c 0 60%,transparent 100%),linear-gradient(#3b3a2c,#22221e 40%,#2d2b26);box-shadow:0 0 1px rgba(0,0,0,.5)"></div>
<span class="t" style="left:492.4px;width:60px;text-align:center;top:220.5px;font-size:7.600px;color:#262626;letter-spacing:-.2px;transform:scaleX(.935)">VID_20251226_18</span>
<span class="t" style="left:492.4px;width:60px;text-align:center;top:230.0px;font-size:7.600px;color:#262626;letter-spacing:-.2px;transform:scaleX(.935)">4135_lens38mm_</span>
<span class="t" style="left:492.4px;width:60px;text-align:center;top:239.5px;font-size:7.600px;color:#262626;letter-spacing:-.2px;transform:scaleX(.935)">center_seg0003</span>
<div class="abs" style="left:575.0px;top:163.5px;width:29px;height:51px;background:radial-gradient(circle 2px at 78% 22%,#d8b24a 0 60%,transparent 100%),radial-gradient(ellipse 6px 10px at 55% 78%,#7ea4dc 0 70%,transparent 100%),radial-gradient(ellipse 5px 13px at 50% 50%,#f0f0ee 0 70%,transparent 100%),radial-gradient(ellipse 8px 8px at 80% 60%,#c59a7c 0 60%,transparent 100%),linear-gradient(#3b3a2c,#22221e 40%,#2d2b26);box-shadow:0 0 1px rgba(0,0,0,.5)"></div>
<span class="t" style="left:559.5px;width:60px;text-align:center;top:220.5px;font-size:7.600px;color:#262626;letter-spacing:-.2px;transform:scaleX(.935)">VID_20251226_18</span>
<span class="t" style="left:559.5px;width:60px;text-align:center;top:230.0px;font-size:7.600px;color:#262626;letter-spacing:-.2px;transform:scaleX(.935)">4135_lens38mm_</span>
<span class="t" style="left:559.5px;width:60px;text-align:center;top:239.5px;font-size:7.600px;color:#262626;letter-spacing:-.2px;transform:scaleX(.935)">center_seg0004</span>
<div class="abs" style="left:642.2px;top:163.5px;width:29px;height:51px;background:radial-gradient(circle 2px at 78% 22%,#d8b24a 0 60%,transparent 100%),radial-gradient(ellipse 6px 10px at 55% 78%,#7ea4dc 0 70%,transparent 100%),radial-gradient(ellipse 5px 13px at 50% 50%,#f0f0ee 0 70%,transparent 100%),radial-gradient(ellipse 8px 8px at 80% 60%,#c59a7c 0 60%,transparent 100%),linear-gradient(#3b3a2c,#22221e 40%,#2d2b26);box-shadow:0 0 1px rgba(0,0,0,.5)"></div>
<span class="t" style="left:626.7px;width:60px;text-align:center;top:220.5px;font-size:7.600px;color:#262626;letter-spacing:-.2px;transform:scaleX(.935)">VID_20251226_18</span>
<span class="t" style="left:626.7px;width:60px;text-align:center;top:230.0px;font-size:7.600px;color:#262626;letter-spacing:-.2px;transform:scaleX(.935)">4135_lens38mm_</span>
<span class="t" style="left:626.7px;width:60px;text-align:center;top:239.5px;font-size:7.600px;color:#262626;letter-spacing:-.2px;transform:scaleX(.935)">center_seg0005</span>
<div class="abs" style="left:709.3px;top:163.5px;width:29px;height:51px;background:radial-gradient(circle 2px at 78% 22%,#d8b24a 0 60%,transparent 100%),radial-gradient(ellipse 6px 10px at 55% 78%,#7ea4dc 0 70%,transparent 100%),radial-gradient(ellipse 5px 13px at 50% 50%,#f0f0ee 0 70%,transparent 100%),radial-gradient(ellipse 8px 8px at 80% 60%,#c59a7c 0 60%,transparent 100%),linear-gradient(#3b3a2c,#22221e 40%,#2d2b26);box-shadow:0 0 1px rgba(0,0,0,.5)"></div>
<span class="t" style="left:693.8px;width:60px;text-align:center;top:220.5px;font-size:7.600px;color:#262626;letter-spacing:-.2px;transform:scaleX(.935)">VID_20251226_18</span>
<span class="t" style="left:693.8px;width:60px;text-align:center;top:230.0px;font-size:7.600px;color:#262626;letter-spacing:-.2px;transform:scaleX(.935)">4135_lens38mm_</span>
<span class="t" style="left:693.8px;width:60px;text-align:center;top:239.5px;font-size:7.600px;color:#262626;letter-spacing:-.2px;transform:scaleX(.935)">center_seg0006</span>
<div class="abs" style="left:776.5px;top:163.5px;width:29px;height:51px;background:radial-gradient(circle 2px at 78% 22%,#d8b24a 0 60%,transparent 100%),radial-gradient(ellipse 6px 10px at 55% 78%,#7ea4dc 0 70%,transparent 100%),radial-gradient(ellipse 5px 13px at 50% 50%,#f0f0ee 0 70%,transparent 100%),radial-gradient(ellipse 8px 8px at 80% 60%,#c59a7c 0 60%,transparent 100%),linear-gradient(#3b3a2c,#22221e 40%,#2d2b26);box-shadow:0 0 1px rgba(0,0,0,.5)"></div>
<span class="t" style="left:761.0px;width:60px;text-align:center;top:220.5px;font-size:7.600px;color:#262626;letter-spacing:-.2px;transform:scaleX(.935)">VID_20251226_18</span>
<span class="t" style="left:761.0px;width:60px;text-align:center;top:230.0px;font-size:7.600px;color:#262626;letter-spacing:-.2px;transform:scaleX(.935)">4135_lens38mm_</span>
<span class="t" style="left:761.0px;width:60px;text-align:center;top:239.5px;font-size:7.600px;color:#262626;letter-spacing:-.2px;transform:scaleX(.935)">center_seg0007</span>
<div class="abs" style="left:37.8px;top:253.0px;width:29px;height:51px;background:radial-gradient(circle 2px at 78% 22%,#d8b24a 0 60%,transparent 100%),radial-gradient(ellipse 6px 10px at 55% 78%,#7ea4dc 0 70%,transparent 100%),radial-gradient(ellipse 5px 13px at 50% 50%,#f0f0ee 0 70%,transparent 100%),radial-gradient(ellipse 8px 8px at 80% 60%,#c59a7c 0 60%,transparent 100%),linear-gradient(#3b3a2c,#22221e 40%,#2d2b26);box-shadow:0 0 1px rgba(0,0,0,.5)"></div>
<span class="t" style="left:22.2px;width:60px;text-align:center;top:310.0px;font-size:7.600px;color:#262626;letter-spacing:-.2px;transform:scaleX(.935)">VID_20251226_18</span>
<span class="t" style="left:22.2px;width:60px;text-align:center;top:319.5px;font-size:7.600px;color:#262626;letter-spacing:-.2px;transform:scaleX(.935)">4135_lens38mm_</span>
<span class="t" style="left:22.2px;width:60px;text-align:center;top:329.0px;font-size:7.600px;color:#262626;letter-spacing:-.2px;transform:scaleX(.935)">center_seg0008</span>
<div class="abs" style="left:104.9px;top:253.0px;width:29px;height:51px;background:radial-gradient(circle 2px at 78% 22%,#d8b24a 0 60%,transparent 100%),radial-gradient(ellipse 6px 10px at 55% 78%,#7ea4dc 0 70%,transparent 100%),radial-gradient(ellipse 5px 13px at 50% 50%,#f0f0ee 0 70%,transparent 100%),radial-gradient(ellipse 8px 8px at 80% 60%,#c59a7c 0 60%,transparent 100%),linear-gradient(#3b3a2c,#22221e 40%,#2d2b26);box-shadow:0 0 1px rgba(0,0,0,.5)"></div>
<span class="t" style="left:89.4px;width:60px;text-align:center;top:310.0px;font-size:7.600px;color:#262626;letter-spacing:-.2px;transform:scaleX(.935)">VID_20251226_18</span>
<span class="t" style="left:89.4px;width:60px;text-align:center;top:319.5px;font-size:7.600px;color:#262626;letter-spacing:-.2px;transform:scaleX(.935)">4135_lens38mm_</span>
<span class="t" style="left:89.4px;width:60px;text-align:center;top:329.0px;font-size:7.600px;color:#262626;letter-spacing:-.2px;transform:scaleX(.935)">center_seg0009</span>
<div class="abs" style="left:172.1px;top:253.0px;width:29px;height:51px;background:radial-gradient(circle 2px at 78% 22%,#d8b24a 0 60%,transparent 100%),radial-gradient(ellipse 6px 10px at 55% 78%,#7ea4dc 0 70%,transparent 100%),radial-gradient(ellipse 5px 13px at 50% 50%,#f0f0ee 0 70%,transparent 100%),radial-gradient(ellipse 8px 8px at 80% 60%,#c59a7c 0 60%,transparent 100%),linear-gradient(#3b3a2c,#22221e 40%,#2d2b26);box-shadow:0 0 1px rgba(0,0,0,.5)"></div>
<span class="t" style="left:156.6px;width:60px;text-align:center;top:310.0px;font-size:7.600px;color:#262626;letter-spacing:-.2px;transform:scaleX(.935)">VID_20251226_18</span>
<span class="t" style="left:156.6px;width:60px;text-align:center;top:319.5px;font-size:7.600px;color:#262626;letter-spacing:-.2px;transform:scaleX(.935)">4135_lens38mm_</span>
<span class="t" style="left:156.6px;width:60px;text-align:center;top:329.0px;font-size:7.600px;color:#262626;letter-spacing:-.2px;transform:scaleX(.935)">center_seg0010</span>
<div class="abs" style="left:239.2px;top:253.0px;width:29px;height:51px;background:radial-gradient(circle 2px at 78% 22%,#d8b24a 0 60%,transparent 100%),radial-gradient(ellipse 6px 10px at 55% 78%,#7ea4dc 0 70%,transparent 100%),radial-gradient(ellipse 5px 13px at 50% 50%,#f0f0ee 0 70%,transparent 100%),radial-gradient(ellipse 8px 8px at 80% 60%,#c59a7c 0 60%,transparent 100%),linear-gradient(#3b3a2c,#22221e 40%,#2d2b26);box-shadow:0 0 1px rgba(0,0,0,.5)"></div>
<span class="t" style="left:223.7px;width:60px;text-align:center;top:310.0px;font-size:7.600px;color:#262626;letter-spacing:-.2px;transform:scaleX(.935)">VID_20251226_18</span>
<span class="t" style="left:223.7px;width:60px;text-align:center;top:319.5px;font-size:7.600px;color:#262626;letter-spacing:-.2px;transform:scaleX(.935)">4135_lens38mm_</span>
<span class="t" style="left:223.7px;width:60px;text-align:center;top:329.0px;font-size:7.600px;color:#262626;letter-spacing:-.2px;transform:scaleX(.935)">center_seg0011</span>
<div class="abs" style="left:306.4px;top:253.0px;width:29px;height:51px;background:radial-gradient(circle 2px at 78% 22%,#d8b24a 0 60%,transparent 100%),radial-gradient(ellipse 6px 10px at 55% 78%,#7ea4dc 0 70%,transparent 100%),radial-gradient(ellipse 5px 13px at 50% 50%,#f0f0ee 0 70%,transparent 100%),radial-gradient(ellipse 8px 8px at 80% 60%,#c59a7c 0 60%,transparent 100%),linear-gradient(#3b3a2c,#22221e 40%,#2d2b26);box-shadow:0 0 1px rgba(0,0,0,.5)"></div>
<span class="t" style="left:290.9px;width:60px;text-align:center;top:310.0px;font-size:7.600px;color:#262626;letter-spacing:-.2px;transform:scaleX(.935)">VID_20251226_18</span>
<span class="t" style="left:290.9px;width:60px;text-align:center;top:319.5px;font-size:7.600px;color:#262626;letter-spacing:-.2px;transform:scaleX(.935)">4135_lens38mm_</span>
<span class="t" style="left:290.9px;width:60px;text-align:center;top:329.0px;font-size:7.600px;color:#262626;letter-spacing:-.2px;transform:scaleX(.935)">center_seg0012</span>
<div class="abs" style="left:373.5px;top:253.0px;width:29px;height:51px;background:radial-gradient(circle 2px at 78% 22%,#d8b24a 0 60%,transparent 100%),radial-gradient(ellipse 6px 10px at 55% 78%,#7ea4dc 0 70%,transparent 100%),radial-gradient(ellipse 5px 13px at 50% 50%,#f0f0ee 0 70%,transparent 100%),radial-gradient(ellipse 8px 8px at 80% 60%,#c59a7c 0 60%,transparent 100%),linear-gradient(#3b3a2c,#22221e 40%,#2d2b26);box-shadow:0 0 1px rgba(0,0,0,.5)"></div>
<span class="t" style="left:358.0px;width:60px;text-align:center;top:310.0px;font-size:7.600px;color:#262626;letter-spacing:-.2px;transform:scaleX(.935)">VID_20251226_18</span>
<span class="t" style="left:358.0px;width:60px;text-align:center;top:319.5px;font-size:7.600px;color:#262626;letter-spacing:-.2px;transform:scaleX(.935)">4135_lens38mm_</span>
<span class="t" style="left:358.0px;width:60px;text-align:center;top:329.0px;font-size:7.600px;color:#262626;letter-spacing:-.2px;transform:scaleX(.935)">center_seg0013</span>
<div class="abs" style="left:440.7px;top:253.0px;width:29px;height:51px;background:radial-gradient(ellipse 8px 9px at 45% 80%,#eef1f4 0 45%,rgba(200,170,150,.9) 75%,transparent 100%),radial-gradient(ellipse 4px 8px at 30% 55%,#3aa0b8 0 60%,transparent 100%),linear-gradient(90deg,transparent 60%,#3a3432 60%,#4a4442 100%) 0 38%/100% 5% no-repeat,linear-gradient(90deg,transparent 40%,#5a4a40 40%,#8a7466 50%,#4e4038 62%,transparent 62%) 0 35%/100% 42% no-repeat,linear-gradient(#bdbdbb,#b0b0ae 45%,#8a8a88 62%,#6e6e6c 80%,#7d7d7a);box-shadow:0 0 1px rgba(0,0,0,.5)"></div>
<span class="t" style="left:425.2px;width:60px;text-align:center;top:310.0px;font-size:7.600px;color:#262626;letter-spacing:-.2px;transform:scaleX(.935)">VID_20251226_18</span>
<span class="t" style="left:425.2px;width:60px;text-align:center;top:319.5px;font-size:7.600px;color:#262626;letter-spacing:-.2px;transform:scaleX(.935)">5221_lens32mm_</span>
<span class="t" style="left:425.2px;width:60px;text-align:center;top:329.0px;font-size:7.600px;color:#262626;letter-spacing:-.2px;transform:scaleX(.935)">center_seg0001</span>
<div class="abs" style="left:507.9px;top:253.0px;width:29px;height:51px;background:radial-gradient(ellipse 8px 9px at 45% 80%,#eef1f4 0 45%,rgba(200,170,150,.9) 75%,transparent 100%),radial-gradient(ellipse 4px 8px at 30% 55%,#3aa0b8 0 60%,transparent 100%),linear-gradient(90deg,transparent 60%,#3a3432 60%,#4a4442 100%) 0 38%/100% 5% no-repeat,linear-gradient(90deg,transparent 40%,#5a4a40 40%,#8a7466 50%,#4e4038 62%,transparent 62%) 0 35%/100% 42% no-repeat,linear-gradient(#bdbdbb,#b0b0ae 45%,#8a8a88 62%,#6e6e6c 80%,#7d7d7a);box-shadow:0 0 1px rgba(0,0,0,.5)"></div>
<span class="t" style="left:492.4px;width:60px;text-align:center;top:310.0px;font-size:7.600px;color:#262626;letter-spacing:-.2px;transform:scaleX(.935)">VID_20251226_18</span>
<span class="t" style="left:492.4px;width:60px;text-align:center;top:319.5px;font-size:7.600px;color:#262626;letter-spacing:-.2px;transform:scaleX(.935)">5221_lens32mm_</span>
<span class="t" style="left:492.4px;width:60px;text-align:center;top:329.0px;font-size:7.600px;color:#262626;letter-spacing:-.2px;transform:scaleX(.935)">center_seg0002</span>
<div class="abs" style="left:575.0px;top:253.0px;width:29px;height:51px;background:radial-gradient(ellipse 8px 9px at 45% 80%,#eef1f4 0 45%,rgba(200,170,150,.9) 75%,transparent 100%),radial-gradient(ellipse 4px 8px at 30% 55%,#3aa0b8 0 60%,transparent 100%),linear-gradient(90deg,transparent 60%,#3a3432 60%,#4a4442 100%) 0 38%/100% 5% no-repeat,linear-gradient(90deg,transparent 40%,#5a4a40 40%,#8a7466 50%,#4e4038 62%,transparent 62%) 0 35%/100% 42% no-repeat,linear-gradient(#bdbdbb,#b0b0ae 45%,#8a8a88 62%,#6e6e6c 80%,#7d7d7a);box-shadow:0 0 1px rgba(0,0,0,.5)"></div>
<span class="t" style="left:559.5px;width:60px;text-align:center;top:310.0px;font-size:7.600px;color:#262626;letter-spacing:-.2px;transform:scaleX(.935)">VID_20251226_18</span>
<span class="t" style="left:559.5px;width:60px;text-align:center;top:319.5px;font-size:7.600px;color:#262626;letter-spacing:-.2px;transform:scaleX(.935)">5221_lens32mm_</span>
<span class="t" style="left:559.5px;width:60px;text-align:center;top:329.0px;font-size:7.600px;color:#262626;letter-spacing:-.2px;transform:scaleX(.935)">center_seg0003</span>
<div class="abs" style="left:642.2px;top:253.0px;width:29px;height:51px;background:radial-gradient(ellipse 8px 9px at 45% 80%,#eef1f4 0 45%,rgba(200,170,150,.9) 75%,transparent 100%),radial-gradient(ellipse 4px 8px at 30% 55%,#3aa0b8 0 60%,transparent 100%),linear-gradient(90deg,transparent 60%,#3a3432 60%,#4a4442 100%) 0 38%/100% 5% no-repeat,linear-gradient(90deg,transparent 40%,#5a4a40 40%,#8a7466 50%,#4e4038 62%,transparent 62%) 0 35%/100% 42% no-repeat,linear-gradient(#bdbdbb,#b0b0ae 45%,#8a8a88 62%,#6e6e6c 80%,#7d7d7a);box-shadow:0 0 1px rgba(0,0,0,.5)"></div>
<span class="t" style="left:626.7px;width:60px;text-align:center;top:310.0px;font-size:7.600px;color:#262626;letter-spacing:-.2px;transform:scaleX(.935)">VID_20251226_18</span>
<span class="t" style="left:626.7px;width:60px;text-align:center;top:319.5px;font-size:7.600px;color:#262626;letter-spacing:-.2px;transform:scaleX(.935)">5221_lens32mm_</span>
<span class="t" style="left:626.7px;width:60px;text-align:center;top:329.0px;font-size:7.600px;color:#262626;letter-spacing:-.2px;transform:scaleX(.935)">center_seg0004</span>
<div class="abs" style="left:709.3px;top:253.0px;width:29px;height:51px;background:radial-gradient(ellipse 8px 9px at 45% 80%,#eef1f4 0 45%,rgba(200,170,150,.9) 75%,transparent 100%),radial-gradient(ellipse 4px 8px at 30% 55%,#3aa0b8 0 60%,transparent 100%),linear-gradient(90deg,transparent 60%,#3a3432 60%,#4a4442 100%) 0 38%/100% 5% no-repeat,linear-gradient(90deg,transparent 40%,#5a4a40 40%,#8a7466 50%,#4e4038 62%,transparent 62%) 0 35%/100% 42% no-repeat,linear-gradient(#bdbdbb,#b0b0ae 45%,#8a8a88 62%,#6e6e6c 80%,#7d7d7a);box-shadow:0 0 1px rgba(0,0,0,.5)"></div>
<span class="t" style="left:693.8px;width:60px;text-align:center;top:310.0px;font-size:7.600px;color:#262626;letter-spacing:-.2px;transform:scaleX(.935)">VID_20251226_18</span>
<span class="t" style="left:693.8px;width:60px;text-align:center;top:319.5px;font-size:7.600px;color:#262626;letter-spacing:-.2px;transform:scaleX(.935)">5221_lens32mm_</span>
<span class="t" style="left:693.8px;width:60px;text-align:center;top:329.0px;font-size:7.600px;color:#262626;letter-spacing:-.2px;transform:scaleX(.935)">center_seg0005</span>
<div class="abs" style="left:776.5px;top:253.0px;width:29px;height:51px;background:radial-gradient(ellipse 8px 9px at 45% 80%,#eef1f4 0 45%,rgba(200,170,150,.9) 75%,transparent 100%),radial-gradient(ellipse 4px 8px at 30% 55%,#3aa0b8 0 60%,transparent 100%),linear-gradient(90deg,transparent 60%,#3a3432 60%,#4a4442 100%) 0 38%/100% 5% no-repeat,linear-gradient(90deg,transparent 40%,#5a4a40 40%,#8a7466 50%,#4e4038 62%,transparent 62%) 0 35%/100% 42% no-repeat,linear-gradient(#bdbdbb,#b0b0ae 45%,#8a8a88 62%,#6e6e6c 80%,#7d7d7a);box-shadow:0 0 1px rgba(0,0,0,.5)"></div>
<span class="t" style="left:761.0px;width:60px;text-align:center;top:310.0px;font-size:7.600px;color:#262626;letter-spacing:-.2px;transform:scaleX(.935)">VID_20251226_18</span>
<span class="t" style="left:761.0px;width:60px;text-align:center;top:319.5px;font-size:7.600px;color:#262626;letter-spacing:-.2px;transform:scaleX(.935)">5221_lens32mm_</span>
<span class="t" style="left:761.0px;width:60px;text-align:center;top:329.0px;font-size:7.600px;color:#262626;letter-spacing:-.2px;transform:scaleX(.935)">center_seg0006</span>
<div class="abs" style="left:37.8px;top:342.5px;width:29px;height:51px;background:radial-gradient(ellipse 8px 9px at 45% 80%,#eef1f4 0 45%,rgba(200,170,150,.9) 75%,transparent 100%),radial-gradient(ellipse 4px 8px at 30% 55%,#3aa0b8 0 60%,transparent 100%),linear-gradient(90deg,transparent 60%,#3a3432 60%,#4a4442 100%) 0 38%/100% 5% no-repeat,linear-gradient(90deg,transparent 40%,#5a4a40 40%,#8a7466 50%,#4e4038 62%,transparent 62%) 0 35%/100% 42% no-repeat,linear-gradient(#bdbdbb,#b0b0ae 45%,#8a8a88 62%,#6e6e6c 80%,#7d7d7a);box-shadow:0 0 1px rgba(0,0,0,.5)"></div>
<span class="t" style="left:22.2px;width:60px;text-align:center;top:399.5px;font-size:7.600px;color:#262626;letter-spacing:-.2px;transform:scaleX(.935)">VID_20251226_18</span>
<span class="t" style="left:22.2px;width:60px;text-align:center;top:409.0px;font-size:7.600px;color:#262626;letter-spacing:-.2px;transform:scaleX(.935)">5221_lens32mm_</span>
<span class="t" style="left:22.2px;width:60px;text-align:center;top:418.5px;font-size:7.600px;color:#262626;letter-spacing:-.2px;transform:scaleX(.935)">center_seg0007</span>
<div class="abs" style="left:104.9px;top:342.5px;width:29px;height:51px;background:radial-gradient(ellipse 8px 9px at 45% 80%,#eef1f4 0 45%,rgba(200,170,150,.9) 75%,transparent 100%),radial-gradient(ellipse 4px 8px at 30% 55%,#3aa0b8 0 60%,transparent 100%),linear-gradient(90deg,transparent 60%,#3a3432 60%,#4a4442 100%) 0 38%/100% 5% no-repeat,linear-gradient(90deg,transparent 40%,#5a4a40 40%,#8a7466 50%,#4e4038 62%,transparent 62%) 0 35%/100% 42% no-repeat,linear-gradient(#bdbdbb,#b0b0ae 45%,#8a8a88 62%,#6e6e6c 80%,#7d7d7a);box-shadow:0 0 1px rgba(0,0,0,.5)"></div>
<span class="t" style="left:89.4px;width:60px;text-align:center;top:399.5px;font-size:7.600px;color:#262626;letter-spacing:-.2px;transform:scaleX(.935)">VID_20251226_18</span>
<span class="t" style="left:89.4px;width:60px;text-align:center;top:409.0px;font-size:7.600px;color:#262626;letter-spacing:-.2px;transform:scaleX(.935)">5221_lens32mm_</span>
<span class="t" style="left:89.4px;width:60px;text-align:center;top:418.5px;font-size:7.600px;color:#262626;letter-spacing:-.2px;transform:scaleX(.935)">center_seg0008</span>
<div class="abs" style="left:172.1px;top:342.5px;width:29px;height:51px;background:radial-gradient(ellipse 8px 9px at 45% 80%,#eef1f4 0 45%,rgba(200,170,150,.9) 75%,transparent 100%),radial-gradient(ellipse 4px 8px at 30% 55%,#3aa0b8 0 60%,transparent 100%),linear-gradient(90deg,transparent 60%,#3a3432 60%,#4a4442 100%) 0 38%/100% 5% no-repeat,linear-gradient(90deg,transparent 40%,#5a4a40 40%,#8a7466 50%,#4e4038 62%,transparent 62%) 0 35%/100% 42% no-repeat,linear-gradient(#bdbdbb,#b0b0ae 45%,#8a8a88 62%,#6e6e6c 80%,#7d7d7a);box-shadow:0 0 1px rgba(0,0,0,.5)"></div>
<span class="t" style="left:156.6px;width:60px;text-align:center;top:399.5px;font-size:7.600px;color:#262626;letter-spacing:-.2px;transform:scaleX(.935)">VID_20251226_18</span>
<span class="t" style="left:156.6px;width:60px;text-align:center;top:409.0px;font-size:7.600px;color:#262626;letter-spacing:-.2px;transform:scaleX(.935)">5221_lens32mm_</span>
<span class="t" style="left:156.6px;width:60px;text-align:center;top:418.5px;font-size:7.600px;color:#262626;letter-spacing:-.2px;transform:scaleX(.935)">center_seg0009</span>
<div class="abs" style="left:239.2px;top:342.5px;width:29px;height:51px;background:radial-gradient(ellipse 8px 9px at 45% 80%,#eef1f4 0 45%,rgba(200,170,150,.9) 75%,transparent 100%),radial-gradient(ellipse 4px 8px at 30% 55%,#3aa0b8 0 60%,transparent 100%),linear-gradient(90deg,transparent 60%,#3a3432 60%,#4a4442 100%) 0 38%/100% 5% no-repeat,linear-gradient(90deg,transparent 40%,#5a4a40 40%,#8a7466 50%,#4e4038 62%,transparent 62%) 0 35%/100% 42% no-repeat,linear-gradient(#bdbdbb,#b0b0ae 45%,#8a8a88 62%,#6e6e6c 80%,#7d7d7a);box-shadow:0 0 1px rgba(0,0,0,.5)"></div>
<span class="t" style="left:223.7px;width:60px;text-align:center;top:399.5px;font-size:7.600px;color:#262626;letter-spacing:-.2px;transform:scaleX(.935)">VID_20251226_18</span>
<span class="t" style="left:223.7px;width:60px;text-align:center;top:409.0px;font-size:7.600px;color:#262626;letter-spacing:-.2px;transform:scaleX(.935)">5221_lens32mm_</span>
<span class="t" style="left:223.7px;width:60px;text-align:center;top:418.5px;font-size:7.600px;color:#262626;letter-spacing:-.2px;transform:scaleX(.935)">center_seg0010</span>
<div class="abs" style="left:306.4px;top:342.5px;width:29px;height:51px;background:radial-gradient(ellipse 8px 9px at 45% 80%,#eef1f4 0 45%,rgba(200,170,150,.9) 75%,transparent 100%),radial-gradient(ellipse 4px 8px at 30% 55%,#3aa0b8 0 60%,transparent 100%),linear-gradient(90deg,transparent 60%,#3a3432 60%,#4a4442 100%) 0 38%/100% 5% no-repeat,linear-gradient(90deg,transparent 40%,#5a4a40 40%,#8a7466 50%,#4e4038 62%,transparent 62%) 0 35%/100% 42% no-repeat,linear-gradient(#bdbdbb,#b0b0ae 45%,#8a8a88 62%,#6e6e6c 80%,#7d7d7a);box-shadow:0 0 1px rgba(0,0,0,.5)"></div>
<span class="t" style="left:290.9px;width:60px;text-align:center;top:399.5px;font-size:7.600px;color:#262626;letter-spacing:-.2px;transform:scaleX(.935)">VID_20251226_18</span>
<span class="t" style="left:290.9px;width:60px;text-align:center;top:409.0px;font-size:7.600px;color:#262626;letter-spacing:-.2px;transform:scaleX(.935)">5221_lens32mm_</span>
<span class="t" style="left:290.9px;width:60px;text-align:center;top:418.5px;font-size:7.600px;color:#262626;letter-spacing:-.2px;transform:scaleX(.935)">center_seg0011</span>
<div class="abs" style="left:373.5px;top:342.5px;width:29px;height:51px;background:radial-gradient(ellipse 8px 9px at 45% 80%,#eef1f4 0 45%,rgba(200,170,150,.9) 75%,transparent 100%),radial-gradient(ellipse 4px 8px at 30% 55%,#3aa0b8 0 60%,transparent 100%),linear-gradient(90deg,transparent 60%,#3a3432 60%,#4a4442 100%) 0 38%/100% 5% no-repeat,linear-gradient(90deg,transparent 40%,#5a4a40 40%,#8a7466 50%,#4e4038 62%,transparent 62%) 0 35%/100% 42% no-repeat,linear-gradient(#bdbdbb,#b0b0ae 45%,#8a8a88 62%,#6e6e6c 80%,#7d7d7a);box-shadow:0 0 1px rgba(0,0,0,.5)"></div>
<span class="t" style="left:358.0px;width:60px;text-align:center;top:399.5px;font-size:7.600px;color:#262626;letter-spacing:-.2px;transform:scaleX(.935)">VID_20251226_18</span>
<span class="t" style="left:358.0px;width:60px;text-align:center;top:409.0px;font-size:7.600px;color:#262626;letter-spacing:-.2px;transform:scaleX(.935)">5221_lens32mm_</span>
<span class="t" style="left:358.0px;width:60px;text-align:center;top:418.5px;font-size:7.600px;color:#262626;letter-spacing:-.2px;transform:scaleX(.935)">center_seg0012</span>
<div class="abs" style="left:440.7px;top:342.5px;width:29px;height:51px;background:radial-gradient(ellipse 11px 8px at 30% 90%,#cfa890 0 80%,transparent),radial-gradient(ellipse 9px 11px at 60% 62%,#f4f6fb 0 40%,#9dbde8 78%,transparent 100%),radial-gradient(ellipse 8px 10px at 32% 50%,#e6edf8 0 35%,#86abe0 80%,transparent 100%),radial-gradient(ellipse 7px 9px at 62% 32%,#ecf1f9 0 35%,#8db0e0 80%,transparent 100%),radial-gradient(ellipse 6px 9px at 84% 48%,#dfe8f6 0 35%,#8db0e0 80%,transparent 100%),radial-gradient(ellipse 6px 7px at 30% 28%,#e6edf8 0 30%,#8db0e0 80%,transparent 100%),linear-gradient(#96502f,#9a5534 30%,#8e8c88 78%,#7c7a76);box-shadow:0 0 1px rgba(0,0,0,.5)"></div>
<span class="t" style="left:425.2px;width:60px;text-align:center;top:399.5px;font-size:7.600px;color:#262626;letter-spacing:-.2px;transform:scaleX(.935)">VID_20251224_13</span>
<span class="t" style="left:425.2px;width:60px;text-align:center;top:409.0px;font-size:7.600px;color:#262626;letter-spacing:-.2px;transform:scaleX(.935)">5446_lens68mm_</span>
<span class="t" style="left:425.2px;width:60px;text-align:center;top:418.5px;font-size:7.600px;color:#262626;letter-spacing:-.2px;transform:scaleX(.935)">right_seg0005</span>
<div class="abs" style="left:507.9px;top:342.5px;width:29px;height:51px;background:radial-gradient(ellipse 11px 8px at 30% 90%,#cfa890 0 80%,transparent),radial-gradient(ellipse 9px 11px at 60% 62%,#f4f6fb 0 40%,#9dbde8 78%,transparent 100%),radial-gradient(ellipse 8px 10px at 32% 50%,#e6edf8 0 35%,#86abe0 80%,transparent 100%),radial-gradient(ellipse 7px 9px at 62% 32%,#ecf1f9 0 35%,#8db0e0 80%,transparent 100%),radial-gradient(ellipse 6px 9px at 84% 48%,#dfe8f6 0 35%,#8db0e0 80%,transparent 100%),radial-gradient(ellipse 6px 7px at 30% 28%,#e6edf8 0 30%,#8db0e0 80%,transparent 100%),linear-gradient(#96502f,#9a5534 30%,#8e8c88 78%,#7c7a76);box-shadow:0 0 1px rgba(0,0,0,.5)"></div>
<span class="t" style="left:492.4px;width:60px;text-align:center;top:399.5px;font-size:7.600px;color:#262626;letter-spacing:-.2px;transform:scaleX(.935)">VID_20251224_13</span>
<span class="t" style="left:492.4px;width:60px;text-align:center;top:409.0px;font-size:7.600px;color:#262626;letter-spacing:-.2px;transform:scaleX(.935)">5446_lens68mm_</span>
<span class="t" style="left:492.4px;width:60px;text-align:center;top:418.5px;font-size:7.600px;color:#262626;letter-spacing:-.2px;transform:scaleX(.935)">right_seg0006</span>
<div class="abs" style="left:575.0px;top:342.5px;width:29px;height:51px;background:radial-gradient(ellipse 11px 8px at 30% 90%,#cfa890 0 80%,transparent),radial-gradient(ellipse 9px 11px at 60% 62%,#f4f6fb 0 40%,#9dbde8 78%,transparent 100%),radial-gradient(ellipse 8px 10px at 32% 50%,#e6edf8 0 35%,#86abe0 80%,transparent 100%),radial-gradient(ellipse 7px 9px at 62% 32%,#ecf1f9 0 35%,#8db0e0 80%,transparent 100%),radial-gradient(ellipse 6px 9px at 84% 48%,#dfe8f6 0 35%,#8db0e0 80%,transparent 100%),radial-gradient(ellipse 6px 7px at 30% 28%,#e6edf8 0 30%,#8db0e0 80%,transparent 100%),linear-gradient(#96502f,#9a5534 30%,#8e8c88 78%,#7c7a76);box-shadow:0 0 1px rgba(0,0,0,.5)"></div>
<span class="t" style="left:559.5px;width:60px;text-align:center;top:399.5px;font-size:7.600px;color:#262626;letter-spacing:-.2px;transform:scaleX(.935)">VID_20251224_13</span>
<span class="t" style="left:559.5px;width:60px;text-align:center;top:409.0px;font-size:7.600px;color:#262626;letter-spacing:-.2px;transform:scaleX(.935)">5446_lens68mm_</span>
<span class="t" style="left:559.5px;width:60px;text-align:center;top:418.5px;font-size:7.600px;color:#262626;letter-spacing:-.2px;transform:scaleX(.935)">right_seg0007</span>
<div class="abs" style="left:642.2px;top:342.5px;width:29px;height:51px;background:radial-gradient(ellipse 11px 8px at 30% 90%,#cfa890 0 80%,transparent),radial-gradient(ellipse 9px 11px at 60% 62%,#f4f6fb 0 40%,#9dbde8 78%,transparent 100%),radial-gradient(ellipse 8px 10px at 32% 50%,#e6edf8 0 35%,#86abe0 80%,transparent 100%),radial-gradient(ellipse 7px 9px at 62% 32%,#ecf1f9 0 35%,#8db0e0 80%,transparent 100%),radial-gradient(ellipse 6px 9px at 84% 48%,#dfe8f6 0 35%,#8db0e0 80%,transparent 100%),radial-gradient(ellipse 6px 7px at 30% 28%,#e6edf8 0 30%,#8db0e0 80%,transparent 100%),linear-gradient(#96502f,#9a5534 30%,#8e8c88 78%,#7c7a76);box-shadow:0 0 1px rgba(0,0,0,.5)"></div>
<span class="t" style="left:626.7px;width:60px;text-align:center;top:399.5px;font-size:7.600px;color:#262626;letter-spacing:-.2px;transform:scaleX(.935)">VID_20251224_13</span>
<span class="t" style="left:626.7px;width:60px;text-align:center;top:409.0px;font-size:7.600px;color:#262626;letter-spacing:-.2px;transform:scaleX(.935)">5446_lens68mm_</span>
<span class="t" style="left:626.7px;width:60px;text-align:center;top:418.5px;font-size:7.600px;color:#262626;letter-spacing:-.2px;transform:scaleX(.935)">right_seg0008</span>
<div class="abs" style="left:708.3px;top:343.5px;width:31px;height:48px;background:#fafafa;border:1px solid #e3e3e3;box-shadow:0 1px 1px rgba(0,0,0,.1)"></div>
<div class="abs" style="left:712.3px;top:357.5px;width:23px;height:23px;border-radius:12px;background:#26201e;border:2.500px solid #c0607a;border-top-color:#e08a4a;border-left-color:#a050a0"></div>
<div class="abs" style="left:720.8px;top:364.0px;width:0;height:0;border-left:8px solid #fff;border-top:5px solid transparent;border-bottom:5px solid transparent"></div>
<span class="t" style="left:693.8px;width:60px;text-align:center;top:399.5px;font-size:7.600px;color:#262626;letter-spacing:-.2px;transform:scaleX(.935)">VID_20251226_19</span>
<span class="t" style="left:693.8px;width:60px;text-align:center;top:409.0px;font-size:7.600px;color:#262626;letter-spacing:-.2px;transform:scaleX(.935)">0221_lens62mm_</span>
<span class="t" style="left:693.8px;width:60px;text-align:center;top:418.5px;font-size:7.600px;color:#262626;letter-spacing:-.2px;transform:scaleX(.935)">right_seg0001</span>
<div class="abs" style="left:338px;top:113px;width:70px;height:34px;background:rgba(255,255,255,.6);border:1px solid rgba(215,215,215,.5)"></div>
<span class="t" style="left:342px;top:117px;font-size:6.500px;color:#bdbdbd">ชนิดรายการ: เสียง MP4</span><span class="t" style="left:342px;top:126px;font-size:6.500px;color:#bdbdbd">ขนาด: 2.59 MB</span><span class="t" style="left:342px;top:135px;font-size:6.500px;color:#bdbdbd">ความยาว: 00:00:03</span></div>
<svg style="left:351px;top:365px" width="20" height="28" viewBox="0 0 20 28"><path d="M8 1l2.500 3h-2v3.500h3.500v-2l3 2.500-3 2.500v-2H8.500V12h2L8 15 5.500 12h2V8.500H4v2L1 8l3-2.500v2h3.500V4h-2z" fill="#fff" stroke="#000" stroke-width=".8"/><path d="M9 10v14l3.200-3 2.500 6 2-1-2.500-5.800h4.300z" fill="#fff" stroke="#000" stroke-width="1"/></svg>
  </div>
</div>
<div id="tb">
  <!-- weather -->
  <svg style="left:20px;top:6px" width="28" height="30" viewBox="0 0 28 30"><defs><radialGradient id="sun" cx=".4" cy=".4" r=".7"><stop offset="0" stop-color="#ffd24a"/><stop offset="1" stop-color="#f08a1c"/></radialGradient></defs><circle cx="12" cy="18" r="10" fill="url(#sun)"/><path d="M13 26a3.500 3.500 0 0 1 .5-7 4.500 4.500 0 0 1 8.500 1 3 3 0 0 1 0 6z" fill="#dfe7f2" stroke="#c3cfe0" stroke-width=".5"/><circle cx="18" cy="8" r="7.500" fill="#c42b1c"/><text x="18" y="11.800" font-size="10.500" fill="#fff" text-anchor="middle" font-family="Liberation Sans,sans-serif">2</text></svg>
  <span class="t" style="transform:scaleX(0.889);transform-origin:0 0;max-width:28px;overflow-x:clip;left:51px;top:10px;font-size:12px;color:#1b1b1b">29°C</span>
  <span class="t" style="transform:scaleX(0.914);transform-origin:0 0;max-width:71px;overflow-x:clip;left:51px;top:25px;font-size:11.500px;color:#5a5a5a">มีแดดส่วนใหญ่</span>
  <!-- start -->
  <svg style="left:485px;top:13px" width="23" height="23" viewBox="0 0 23 23"><defs><linearGradient id="wl" x1="0" y1="0" x2="1" y2="1"><stop offset="0" stop-color="#4cc2f5"/><stop offset="1" stop-color="#0a6fd0"/></linearGradient></defs><rect x="0" y="0" width="11" height="11" rx="1" fill="url(#wl)"/><rect x="12" y="0" width="11" height="11" rx="1" fill="url(#wl)"/><rect x="0" y="12" width="11" height="11" rx="1" fill="url(#wl)"/><rect x="12" y="12" width="11" height="11" rx="1" fill="url(#wl)"/></svg>
  <!-- search pill -->
  <div class="abs" style="left:522px;top:9px;width:217px;height:30px;border-radius:15px;background:#fbfcfd;border:1px solid #dfe3e6;box-shadow:0 1px 1px rgba(0,0,0,.06)"></div>
  <svg style="left:532px;top:16px" width="17" height="17" viewBox="0 0 17 17" fill="none" stroke="#222" stroke-width="1.600"><circle cx="7" cy="7" r="5.300"/><path d="M11 11l4.800 4.800"/></svg>
  <span class="t" style="transform:scaleX(1.020);transform-origin:0 0;max-width:51px;overflow-x:clip;left:558px;top:18px;font-size:13px;color:#555">การค้นหา</span>
  <svg style="left:688px;top:12px" width="50" height="25" viewBox="0 0 50 25"><defs><linearGradient id="sk" x1="0" y1="0" x2="0" y2="1"><stop offset="0" stop-color="#3a6fc0"/><stop offset=".5" stop-color="#6f9fdc"/><stop offset="1" stop-color="#2a4f96"/></linearGradient><clipPath id="ov"><ellipse cx="25" cy="12.500" rx="24.500" ry="12"/></clipPath></defs><g clip-path="url(#ov)"><rect width="50" height="25" fill="url(#sk)"/><path d="M0 20l8-6 5 3 7-8 6 5 5-3 8 6 11-5v13H0z" fill="#dfe9f6" opacity=".85"/><path d="M29 3l2 3v8h-4V6z" fill="#1d3c78"/><path d="M6 22l6-3 8 2 10-3 12 3 8-2v6H0z" fill="#1e3f80" opacity=".8"/></g></svg>
  <!-- task view -->
  <svg style="left:753px;top:12px" width="26" height="24" viewBox="0 0 26 24"><rect x="8" y="1" width="16" height="14" rx="2" fill="#f6f6f6" stroke="#d8d8d8"/><rect x="1" y="8" width="17" height="14" rx="2" fill="#1f1f1f"/><rect x="8" y="8" width="10" height="7" fill="#bdbdbd"/></svg>
  <!-- copilot -->
  <svg style="left:797px;top:12px" width="24" height="23" viewBox="0 0 24 23"><defs><linearGradient id="cp1" x1="0" y1="0" x2="1" y2="1"><stop offset="0" stop-color="#7a6cf0"/><stop offset=".45" stop-color="#c45ad8"/><stop offset=".75" stop-color="#f0508a"/><stop offset="1" stop-color="#f9923c"/></linearGradient><linearGradient id="cp2" x1="0" y1="0" x2="1" y2="1"><stop offset="0" stop-color="#25a2f0"/><stop offset=".45" stop-color="#2fc48a"/><stop offset=".8" stop-color="#b8d43a"/><stop offset="1" stop-color="#f9c23c"/></linearGradient></defs><path d="M9.500 1h6.500q2.500 0 3.300 2.500l3.400 10.500q1 4-3 4h-3.200l-3.500-12.500Q12.500 3 10.500 3q-1.800 0-2.500 2z" fill="url(#cp1)"/><path d="M14.500 22H8q-2.500 0-3.300-2.500L1.300 9Q.3 5 4.300 5h3.200L11 17.500q.5 2.500 2.500 2.500 1.800 0 2.500-2z" fill="url(#cp2)"/><path d="M9.500 5.500h4.200l2 7-1.700 5h-4.200l-2-7z" fill="#fff" opacity=".35"/></svg>
  <!-- explorer -->
  <svg style="left:840px;top:11px" width="27" height="26" viewBox="0 0 27 26"><path d="M1 5a2 2 0 0 1 2-2h7l3 3h11a2 2 0 0 1 2 2v3H1z" fill="#e8a922"/><rect x="1" y="7" width="25" height="16" rx="2" fill="#fbd65a"/><path d="M5 23v-6a2 2 0 0 1 2-2h13a2 2 0 0 1 2 2v6z" fill="#2a86d9"/><rect x="8.500" y="18.500" width="10" height="2.200" rx="1" fill="#1565b8"/></svg>
  <!-- store -->
  <svg style="left:884px;top:11px" width="26" height="26" viewBox="0 0 26 26"><path d="M8 7V5a5 5 0 0 1 10 0v2" fill="none" stroke="#3a9bd8" stroke-width="1.800"/><rect x="2" y="7" width="22" height="17" rx="3" fill="#17498a"/><rect x="2" y="7" width="22" height="8" rx="3" fill="#1f5aa3"/><rect x="8" y="11" width="4.500" height="4.500" fill="#f25022"/><rect x="13.500" y="11" width="4.500" height="4.500" fill="#7fba00"/><rect x="8" y="16.500" width="4.500" height="4.500" fill="#00a4ef"/><rect x="13.500" y="16.500" width="4.500" height="4.500" fill="#ffb900"/></svg>
  <!-- edge -->
  <svg style="left:928px;top:11px" width="26" height="26" viewBox="0 0 26 26"><defs><linearGradient id="ed" x1="0" y1="0" x2="1" y2="1"><stop offset="0" stop-color="#35c1a5"/><stop offset=".5" stop-color="#1a90d8"/><stop offset="1" stop-color="#0d5bb4"/></linearGradient></defs><circle cx="13" cy="13" r="12" fill="url(#ed)"/><path d="M3 16q0-9 10-9 8 0 9 6 0 4-5 4-3 0-3-2 0-2 1-2-1-3-4-3-6 0-6 7 0 5 6 7-8-1-8-8z" fill="#e8f6fb" opacity=".9"/><path d="M1.500 10Q5 1.500 14 1.500 24 2 24.500 12q-2-6-10-6-9 0-13 4z" fill="#4fd28b" opacity=".85"/></svg>
  <!-- outlook -->
  <svg style="left:971px;top:11px" width="27" height="26" viewBox="0 0 27 26"><path d="M8 8l10-6 8 6v12a2 2 0 0 1-2 2H10a2 2 0 0 1-2-2z" fill="#1373cf"/><path d="M8 8l10-6 8 6-9 6z" fill="#56b6f7"/><path d="M12 6h11v8l-6 4-5-3z" fill="#bfe4fb"/><path d="M8 12l9 6 9-6v8a2 2 0 0 1-2 2H10a2 2 0 0 1-2-2z" fill="#2a8ce0"/><rect x="1" y="11" width="12" height="12" rx="2" fill="#0f5fb4"/><circle cx="7" cy="17" r="3" fill="none" stroke="#fff" stroke-width="1.600"/></svg>
  <!-- MA app -->
  <svg style="left:1016px;top:8px" width="30" height="30" viewBox="0 0 30 30"><rect x="1" y="5" width="24" height="24" fill="#1c6fd6"/><path d="M1 17h24v12H1z" fill="#155bb8"/><path d="M6 24l6-13h3l-6 13zM11 24l6-13h3l-6 13z" fill="#fff"/><path d="M17 24l2-5h2l1 5h-2v-2h-1l-.5 2z" fill="#fff"/><circle cx="24" cy="6" r="5" fill="#c42b1c"/></svg>
  <!-- drive -->
  <svg style="left:1062px;top:14px" width="23" height="21" viewBox="0 0 27 24"><path d="M9 1h9l9 15h-9z" fill="#fbbc04"/><path d="M9 1L0 16l4.500 7.500L13.500 8.500z" fill="#0f9d58"/><path d="M4.500 23.500h18L27 16H9z" fill="#4285f4"/><path d="M18 16h9l-4.500 7.500z" fill="#ea4335"/><path d="M9 1l4.500 7.500L18 1z" fill="#188038"/></svg>
  <!-- chrome -->
  <svg style="left:1103px;top:6px" width="32" height="32" viewBox="0 0 32 32"><circle cx="13" cy="19" r="12" fill="#fbbc04"/><path d="M13 19L2.600 13A12 12 0 0 1 23.400 13z" fill="#ea4335"/><path d="M13 19L2.600 13A12 12 0 0 0 13 31l6-10z" fill="#34a853"/><path d="M13 19h12a12 12 0 0 0-1.600-6H13z" fill="#ea4335"/><circle cx="13" cy="19" r="5.500" fill="#fff"/><circle cx="13" cy="19" r="4.300" fill="#4285f4"/><circle cx="24" cy="8" r="7" fill="#6e9a4a"/><text x="24" y="11" font-size="7.500" fill="#fff" text-anchor="middle" font-family="Liberation Sans,sans-serif">SJ</text></svg>
  <!-- ppt active -->
  <div class="abs" style="left:1141px;top:4px;width:38px;height:40px;border-radius:4px;background:rgba(255,255,255,.7);border:1px solid rgba(0,0,0,.05)"></div>
  <svg style="left:1147px;top:11px" width="28" height="26" viewBox="0 0 28 26"><circle cx="16" cy="12" r="11" fill="#e5484a"/><path d="M16 1a11 11 0 0 1 11 11q-6 1-11-3z" fill="#f59a55"/><path d="M27 12a11 11 0 0 1-11 11q-2-7 3-11z" fill="#ee6a4c"/><rect x="1" y="12" width="12" height="12" rx="2.500" fill="#c4262e"/><text x="7" y="21.500" font-size="9" font-weight="bold" fill="#fff" text-anchor="middle" font-family="Liberation Sans,sans-serif">P</text></svg>
  <div class="abs" style="left:1152px;top:39.500px;width:16px;height:3px;border-radius:2px;background:#1a6fd0"></div>
  <!-- teal app -->
  <svg style="left:1193px;top:12px" width="24" height="24" viewBox="0 0 24 24"><path d="M1 1l22 2v20l-5-1V8L1 6.500z" fill="#2a8fc8"/><path d="M3 9.500l12 1.200V22l-4-.8v-6.500L3 14z" fill="#2a8fc8"/><path d="M1 1l22 2v2.500L1 3.500z" fill="#2380b5"/></svg>
  <!-- settings -->
  <svg style="left:1236px;top:11px" width="26" height="26" viewBox="0 0 26 26"><path d="M11 1h4l.8 3.200 2.600 1.100 2.900-1.700 2.800 2.800-1.700 2.900 1.100 2.600L25 11v4l-3.200.8-1.100 2.600 1.700 2.900-2.800 2.800-2.900-1.700-2.600 1.100L15 25h-4l-.8-3.200-2.600-1.100-2.900 1.700-2.800-2.800 1.700-2.900-1.100-2.600L1 15v-4l3.200-.8 1.100-2.600-1.700-2.900 2.800-2.800 2.900 1.700 2.600-1.100z" fill="#6d7278"/><circle cx="13" cy="13" r="6" fill="#dfe3e6"/><circle cx="13" cy="13" r="4" fill="#1f6fd0"/></svg>
  <!-- blue app -->
  <svg style="left:1281px;top:12px" width="24" height="24" viewBox="0 0 24 24"><rect x="0" y="0" width="24" height="24" rx="5.500" fill="#3b8cf0"/><path d="M4.500 16l4.500-7.500 3 5 3-5 4.500 7.500h-5.500M4.500 16h5.500" fill="none" stroke="#fff" stroke-width="1.500" stroke-linejoin="round"/></svg>
  <!-- notepad -->
  <svg style="left:1325px;top:10px" width="24" height="28" viewBox="0 0 24 28"><rect x="2" y="3" width="20" height="23" rx="1.500" fill="#39b4e6"/><rect x="2" y="23" width="20" height="3" fill="#c8642a"/><path d="M5 9h14M5 13h14M5 17h14M5 21h14" stroke="#14506e" stroke-width="1.300"/><path d="M5 1.500v4M8.500 1.500v4M12 1.500v4M15.500 1.500v4M19 1.500v4" stroke="#2a6a8a" stroke-width="1.300"/></svg>
  <!-- rdp -->
  <svg style="left:1366px;top:10px" width="30" height="28" viewBox="0 0 30 28"><path d="M3 3l17 2v14L3 17z" fill="#1a3fae"/><path d="M5 5l13 1.600v10L5 15z" fill="#5aa0f0"/><path d="M8 19l8 1v3l-8-1z" fill="#b8bcc4"/><circle cx="22" cy="21" r="6" fill="#d8dcd8" stroke="#aaa" stroke-width=".6"/><path d="M19 19l3 2-3 2M25 19l-3 2 3 2" fill="none" stroke="#2a8a3a" stroke-width="1.300"/></svg>
  <!-- feather -->
  <svg style="left:1415px;top:10px" width="20" height="28" viewBox="0 0 20 28"><path d="M15 1q4 6-1 14-3 5-8 7l-2 5-1-.5 2-5q-1-6 3-13 3-5 7-7.500z" fill="#4a6a98"/><path d="M15 1q-6 8-9 21" stroke="#1d2f50" stroke-width="1" fill="none"/><path d="M15 1q4 6-1 14-3 5-8 7 6-9 9-21z" fill="#2a3f68"/></svg>
  <!-- running dots -->
  <div class="abs" style="left:850px;top:39.500px;width:6px;height:3px;border-radius:2px;background:#8a8a8a"></div>
  <div class="abs" style="left:1025px;top:39.500px;width:6px;height:3px;border-radius:2px;background:#8a8a8a"></div>
  <div class="abs" style="left:1070px;top:39.500px;width:6px;height:3px;border-radius:2px;background:#8a8a8a"></div>
  <div class="abs" style="left:1114px;top:39.500px;width:6px;height:3px;border-radius:2px;background:#8a8a8a"></div>
  <div class="abs" style="left:1202px;top:39.500px;width:6px;height:3px;border-radius:2px;background:#8a8a8a"></div>
  <div class="abs" style="left:1246px;top:39.500px;width:6px;height:3px;border-radius:2px;background:#8a8a8a"></div>
  <div class="abs" style="left:1290px;top:39.500px;width:6px;height:3px;border-radius:2px;background:#8a8a8a"></div>
  <div class="abs" style="left:1334px;top:39.500px;width:6px;height:3px;border-radius:2px;background:#8a8a8a"></div>
  <div class="abs" style="left:1377px;top:39.500px;width:6px;height:3px;border-radius:2px;background:#8a8a8a"></div>
  <div class="abs" style="left:1422px;top:39.500px;width:6px;height:3px;border-radius:2px;background:#8a8a8a"></div>
  <!-- clock -->
  <span class="t" style="transform:scaleX(0.920);transform-origin:0 0;max-width:31px;overflow-x:clip;left:1873px;top:9px;font-size:12px;color:#1b1b1b">14:24</span>
  <span class="t" style="transform:scaleX(1.011);transform-origin:0 0;max-width:54px;overflow-x:clip;left:1847px;top:25px;font-size:12px;color:#1b1b1b">24/1/2569</span>
</div>
</body>
</html>
